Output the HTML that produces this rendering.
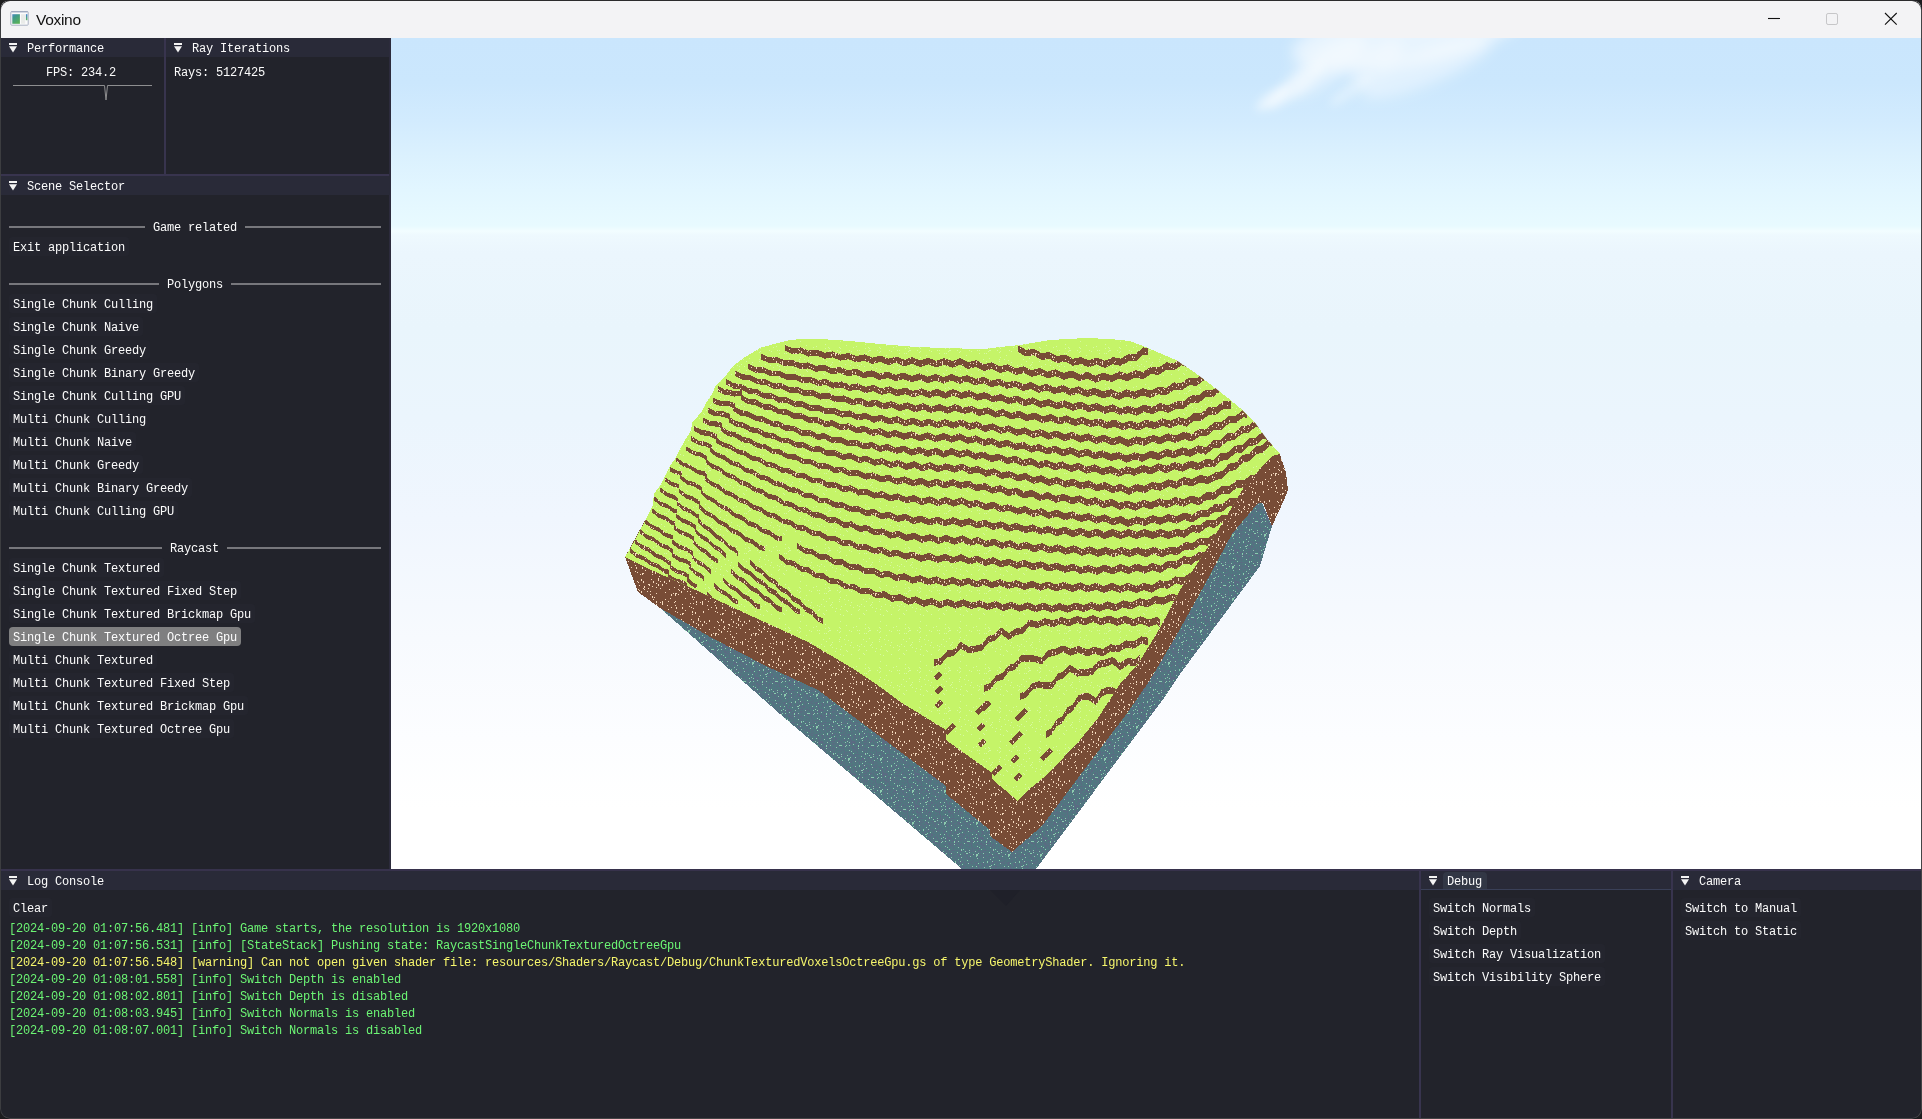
<!DOCTYPE html><html><head><meta charset="utf-8"><title>Voxino</title><style>
html,body{margin:0;padding:0;}
body{width:1922px;height:1119px;overflow:hidden;background:#1c1c1e;position:relative;font-family:"Liberation Mono",monospace;}
#win{will-change:transform;position:absolute;left:0;top:0;width:1922px;height:1119px;border-radius:10px;overflow:hidden;background:#22232b;}
#tb{position:absolute;left:1px;top:1px;width:1920px;height:37px;background:#f3f3f5;}
#ttl{position:absolute;left:36px;top:10px;letter-spacing:-0.3px;font-family:"Liberation Sans",sans-serif;font-size:15.5px;line-height:20px;color:#111;}
.m{position:absolute;white-space:pre;font-family:"Liberation Mono",monospace;font-size:12px;letter-spacing:-0.2px;line-height:14px;color:#fcfcfc;}
.g{color:#6cf574;}
.y{color:#f6f66c;}
.t{position:absolute;background:#292a38;}
.p{position:absolute;background:#22232b;}
.b{position:absolute;background:#24252e;border-radius:3px;height:19px;}
.ln{position:absolute;height:2px;background:#77777c;}
.vb{position:absolute;background:#38344e;}
svg{position:absolute;left:0;top:0;}
</style></head><body><div id="win">
<div id="vp" style="position:absolute;left:391px;top:38px;width:1530px;height:832px;overflow:hidden;background:linear-gradient(#cae6fd 0px,#cbe7fd 45px,#d2ebfe 82px,#dbf1fe 118px,#e2f6ff 152px,#e8faff 188px,#f2fdff 193px,#eef9fe 197px,#ebf6fd 215px,#e9f5fc 290px,#ebf5fd 380px,#f0f6fe 480px,#f7fafe 600px,#fcfdff 700px,#ffffff 770px)">
<svg width="1530" height="832" viewBox="0 0 1530 832" style="position:absolute;left:0;top:0"><defs><filter id="cb" x="-20%" y="-50%" width="140%" height="200%"><feGaussianBlur stdDeviation="7"/></filter><filter id="cb2" x="-20%" y="-50%" width="140%" height="200%"><feGaussianBlur stdDeviation="4"/></filter></defs><g fill="#fff"><g filter="url(#cb)"><ellipse cx="1017" cy="-4" rx="118" ry="32" transform="rotate(-10 1017 -4)" opacity="0.55"/><ellipse cx="1035" cy="30" rx="70" ry="17" transform="rotate(-22 1035 30)" opacity="0.42"/><ellipse cx="935" cy="28" rx="48" ry="17" transform="rotate(-35 935 28)" opacity="0.42"/><ellipse cx="986" cy="25" rx="32" ry="14" transform="rotate(-40 986 25)" opacity="0.35"/></g><g filter="url(#cb2)"><ellipse cx="905" cy="48" rx="36" ry="9" transform="rotate(-38 905 48)" opacity="0.4"/><ellipse cx="882" cy="60" rx="20" ry="7" transform="rotate(-35 882 60)" opacity="0.5"/><ellipse cx="960" cy="52" rx="26" ry="7" transform="rotate(-35 960 52)" opacity="0.3"/></g></g></svg>
<svg width="1530" height="832" viewBox="0 0 1530 832" style="position:absolute;left:0;top:0" shape-rendering="crispEdges">
<defs>
<pattern id="nb" width="40" height="40" patternUnits="userSpaceOnUse"><rect width="40" height="40" fill="#784c36"/><rect x="20" y="9" width="1" height="1" fill="#f6dcc0"/><rect x="3" y="4" width="1" height="1" fill="#f6dcc0"/><rect x="6" y="23" width="1" height="1" fill="#f6dcc0"/><rect x="32" y="13" width="1" height="2" fill="#f6dcc0"/><rect x="27" y="26" width="1" height="2" fill="#f6dcc0"/><rect x="5" y="35" width="1" height="1" fill="#f6dcc0"/><rect x="36" y="7" width="1" height="1" fill="#f6dcc0"/><rect x="37" y="3" width="1" height="1" fill="#f6dcc0"/><rect x="25" y="3" width="1" height="1" fill="#f6dcc0"/><rect x="2" y="35" width="1" height="1" fill="#f6dcc0"/><rect x="18" y="26" width="1" height="2" fill="#f6dcc0"/><rect x="7" y="36" width="1" height="1" fill="#f6dcc0"/><rect x="11" y="6" width="1" height="1" fill="#f6dcc0"/><rect x="12" y="23" width="1" height="2" fill="#f6dcc0"/><rect x="4" y="36" width="1" height="2" fill="#f6dcc0"/><rect x="13" y="31" width="1" height="1" fill="#f6dcc0"/><rect x="27" y="20" width="1" height="1" fill="#f6dcc0"/><rect x="29" y="23" width="1" height="1" fill="#f6dcc0"/><rect x="11" y="15" width="1" height="2" fill="#f6dcc0"/><rect x="19" y="33" width="1" height="1" fill="#f6dcc0"/><rect x="21" y="28" width="1" height="1" fill="#f6dcc0"/><rect x="4" y="7" width="1" height="1" fill="#f6dcc0"/><rect x="10" y="21" width="1" height="2" fill="#f6dcc0"/><rect x="31" y="26" width="1" height="2" fill="#f6dcc0"/><rect x="4" y="35" width="1" height="1" fill="#f6dcc0"/><rect x="20" y="21" width="1" height="1" fill="#f6dcc0"/><rect x="38" y="31" width="1" height="1" fill="#f6dcc0"/><rect x="29" y="4" width="1" height="1" fill="#f6dcc0"/><rect x="17" y="30" width="1" height="1" fill="#f6dcc0"/><rect x="4" y="3" width="1" height="1" fill="#f6dcc0"/><rect x="19" y="36" width="1" height="1" fill="#f6dcc0"/><rect x="28" y="18" width="1" height="1" fill="#f6dcc0"/><rect x="22" y="1" width="1" height="1" fill="#f6dcc0"/><rect x="22" y="10" width="1" height="1" fill="#f6dcc0"/><rect x="31" y="3" width="1" height="2" fill="#f6dcc0"/><rect x="18" y="8" width="1" height="1" fill="#f6dcc0"/><rect x="25" y="25" width="1" height="1" fill="#f6dcc0"/><rect x="31" y="5" width="1" height="2" fill="#f6dcc0"/><rect x="25" y="35" width="1" height="1" fill="#f6dcc0"/><rect x="8" y="27" width="1" height="1" fill="#f6dcc0"/><rect x="17" y="26" width="1" height="1" fill="#f6dcc0"/><rect x="24" y="14" width="1" height="2" fill="#f6dcc0"/><rect x="11" y="9" width="1" height="2" fill="#f6dcc0"/><rect x="14" y="0" width="1" height="1" fill="#f6dcc0"/><rect x="37" y="11" width="1" height="1" fill="#f6dcc0"/><rect x="0" y="9" width="1" height="1" fill="#f6dcc0"/><rect x="23" y="39" width="1" height="1" fill="#f6dcc0"/><rect x="8" y="32" width="1" height="1" fill="#f6dcc0"/><rect x="3" y="29" width="1" height="1" fill="#f6dcc0"/><rect x="35" y="25" width="1" height="1" fill="#f6dcc0"/><rect x="25" y="6" width="1" height="1" fill="#f6dcc0"/><rect x="25" y="3" width="1" height="2" fill="#f6dcc0"/><rect x="13" y="28" width="1" height="2" fill="#f6dcc0"/><rect x="21" y="38" width="1" height="2" fill="#f6dcc0"/><rect x="0" y="36" width="1" height="2" fill="#f6dcc0"/><rect x="6" y="23" width="1" height="1" fill="#f6dcc0"/><rect x="4" y="13" width="1" height="1" fill="#f6dcc0"/><rect x="9" y="16" width="1" height="1" fill="#f6dcc0"/><rect x="38" y="23" width="1" height="1" fill="#f6dcc0"/><rect x="7" y="31" width="1" height="1" fill="#f6dcc0"/><rect x="29" y="30" width="1" height="1" fill="#f6dcc0"/><rect x="5" y="9" width="1" height="2" fill="#f6dcc0"/><rect x="21" y="16" width="1" height="1" fill="#f6dcc0"/><rect x="10" y="33" width="1" height="2" fill="#f6dcc0"/><rect x="33" y="23" width="1" height="2" fill="#f6dcc0"/><rect x="34" y="1" width="1" height="1" fill="#f6dcc0"/><rect x="19" y="5" width="1" height="1" fill="#f6dcc0"/><rect x="16" y="33" width="1" height="1" fill="#f6dcc0"/><rect x="10" y="22" width="1" height="1" fill="#f6dcc0"/><rect x="34" y="34" width="1" height="1" fill="#f6dcc0"/><rect x="21" y="14" width="1" height="1" fill="#f6dcc0"/><rect x="12" y="15" width="1" height="1" fill="#f6dcc0"/><rect x="14" y="12" width="1" height="1" fill="#f6dcc0"/><rect x="22" y="1" width="1" height="1" fill="#f6dcc0"/><rect x="17" y="30" width="1" height="1" fill="#f6dcc0"/><rect x="38" y="22" width="1" height="1" fill="#f6dcc0"/><rect x="22" y="23" width="1" height="2" fill="#f6dcc0"/><rect x="6" y="14" width="1" height="1" fill="#f6dcc0"/><rect x="21" y="13" width="1" height="1" fill="#f6dcc0"/><rect x="39" y="0" width="1" height="1" fill="#f6dcc0"/><rect x="22" y="5" width="1" height="1" fill="#f6dcc0"/><rect x="7" y="24" width="1" height="1" fill="#f6dcc0"/><rect x="12" y="30" width="1" height="1" fill="#f6dcc0"/><rect x="27" y="21" width="1" height="2" fill="#f6dcc0"/><rect x="25" y="29" width="1" height="1" fill="#f6dcc0"/></pattern>
<pattern id="ng" width="40" height="40" patternUnits="userSpaceOnUse"><rect width="40" height="40" fill="#c5f468"/><rect x="5" y="10" width="1" height="1" fill="#d6f9a2"/><rect x="10" y="8" width="1" height="1" fill="#d6f9a2"/><rect x="1" y="9" width="1" height="1" fill="#d6f9a2"/><rect x="37" y="29" width="1" height="1" fill="#d6f9a2"/><rect x="9" y="39" width="1" height="1" fill="#d6f9a2"/><rect x="38" y="30" width="1" height="1" fill="#d6f9a2"/><rect x="22" y="9" width="1" height="1" fill="#d6f9a2"/><rect x="35" y="35" width="1" height="1" fill="#d6f9a2"/><rect x="8" y="1" width="1" height="1" fill="#d6f9a2"/><rect x="0" y="6" width="1" height="1" fill="#d6f9a2"/><rect x="33" y="8" width="1" height="1" fill="#d6f9a2"/><rect x="27" y="12" width="1" height="1" fill="#d6f9a2"/><rect x="13" y="1" width="1" height="1" fill="#d6f9a2"/><rect x="16" y="13" width="1" height="1" fill="#d6f9a2"/><rect x="18" y="32" width="1" height="1" fill="#d6f9a2"/><rect x="15" y="37" width="1" height="1" fill="#d6f9a2"/><rect x="20" y="16" width="1" height="1" fill="#d6f9a2"/><rect x="34" y="26" width="1" height="1" fill="#d6f9a2"/><rect x="8" y="3" width="1" height="1" fill="#d6f9a2"/><rect x="22" y="29" width="1" height="1" fill="#d6f9a2"/><rect x="37" y="33" width="1" height="1" fill="#d6f9a2"/><rect x="26" y="32" width="1" height="1" fill="#d6f9a2"/><rect x="8" y="34" width="1" height="1" fill="#d6f9a2"/><rect x="9" y="33" width="1" height="1" fill="#d6f9a2"/><rect x="32" y="1" width="1" height="1" fill="#d6f9a2"/><rect x="28" y="11" width="1" height="1" fill="#d6f9a2"/><rect x="38" y="0" width="1" height="1" fill="#d6f9a2"/><rect x="9" y="11" width="1" height="1" fill="#d6f9a2"/><rect x="9" y="30" width="1" height="1" fill="#d6f9a2"/><rect x="39" y="7" width="1" height="1" fill="#d6f9a2"/><rect x="35" y="3" width="1" height="1" fill="#d6f9a2"/><rect x="20" y="33" width="1" height="1" fill="#d6f9a2"/><rect x="33" y="35" width="1" height="1" fill="#d6f9a2"/><rect x="30" y="6" width="1" height="1" fill="#d6f9a2"/><rect x="35" y="3" width="1" height="1" fill="#d6f9a2"/><rect x="15" y="12" width="1" height="1" fill="#d6f9a2"/><rect x="17" y="2" width="1" height="1" fill="#d6f9a2"/><rect x="6" y="32" width="1" height="1" fill="#d6f9a2"/><rect x="28" y="35" width="1" height="1" fill="#d6f9a2"/><rect x="1" y="4" width="1" height="1" fill="#d6f9a2"/><rect x="28" y="20" width="1" height="1" fill="#d6f9a2"/><rect x="39" y="32" width="1" height="1" fill="#d6f9a2"/><rect x="38" y="32" width="1" height="1" fill="#d6f9a2"/><rect x="12" y="17" width="1" height="1" fill="#d6f9a2"/><rect x="28" y="32" width="1" height="1" fill="#d6f9a2"/><rect x="34" y="30" width="1" height="1" fill="#d6f9a2"/><rect x="32" y="15" width="1" height="1" fill="#d6f9a2"/><rect x="33" y="16" width="1" height="1" fill="#d6f9a2"/><rect x="35" y="12" width="1" height="1" fill="#d6f9a2"/><rect x="28" y="8" width="1" height="1" fill="#d6f9a2"/><rect x="26" y="7" width="1" height="1" fill="#d6f9a2"/><rect x="25" y="28" width="1" height="1" fill="#d6f9a2"/><rect x="20" y="4" width="1" height="1" fill="#d6f9a2"/><rect x="15" y="27" width="1" height="1" fill="#d6f9a2"/><rect x="4" y="13" width="1" height="1" fill="#d6f9a2"/><rect x="19" y="7" width="1" height="1" fill="#d6f9a2"/><rect x="9" y="23" width="1" height="1" fill="#d6f9a2"/><rect x="9" y="16" width="1" height="1" fill="#d6f9a2"/><rect x="8" y="29" width="1" height="1" fill="#d6f9a2"/><rect x="14" y="6" width="1" height="1" fill="#d6f9a2"/></pattern>
<pattern id="nu" width="32" height="32" patternUnits="userSpaceOnUse"><rect width="32" height="32" fill="#507780"/><rect x="25" y="31" width="1" height="1" fill="#5b6a83"/><rect x="10" y="14" width="1" height="1" fill="#5b6a83"/><rect x="10" y="27" width="1" height="1" fill="#5b6a83"/><rect x="25" y="21" width="1" height="1" fill="#5b6a83"/><rect x="26" y="12" width="1" height="1" fill="#5b6a83"/><rect x="22" y="20" width="1" height="1" fill="#5b6a83"/><rect x="5" y="23" width="1" height="1" fill="#5b6a83"/><rect x="1" y="21" width="1" height="1" fill="#5b6a83"/><rect x="29" y="28" width="1" height="1" fill="#5b6a83"/><rect x="1" y="24" width="1" height="1" fill="#5b6a83"/><rect x="21" y="18" width="1" height="1" fill="#5b6a83"/><rect x="4" y="7" width="1" height="1" fill="#5b6a83"/><rect x="14" y="6" width="1" height="1" fill="#5b6a83"/><rect x="5" y="16" width="1" height="1" fill="#5b6a83"/><rect x="17" y="2" width="1" height="1" fill="#5b6a83"/><rect x="11" y="17" width="1" height="1" fill="#5b6a83"/><rect x="8" y="27" width="1" height="1" fill="#5b6a83"/><rect x="16" y="25" width="1" height="1" fill="#5b6a83"/><rect x="9" y="31" width="1" height="1" fill="#5b6a83"/><rect x="20" y="5" width="1" height="1" fill="#5b6a83"/><rect x="17" y="3" width="1" height="1" fill="#5b6a83"/><rect x="11" y="27" width="1" height="1" fill="#5b6a83"/><rect x="4" y="17" width="1" height="1" fill="#5b6a83"/><rect x="1" y="5" width="1" height="1" fill="#5b6a83"/><rect x="16" y="5" width="1" height="1" fill="#5b6a83"/><rect x="14" y="4" width="1" height="1" fill="#5b6a83"/><rect x="16" y="7" width="1" height="1" fill="#5b6a83"/><rect x="29" y="0" width="1" height="1" fill="#5b6a83"/><rect x="21" y="26" width="1" height="1" fill="#5b6a83"/><rect x="17" y="8" width="1" height="1" fill="#5b6a83"/><rect x="2" y="15" width="1" height="1" fill="#5b6a83"/><rect x="7" y="10" width="1" height="1" fill="#5b6a83"/><rect x="16" y="3" width="1" height="1" fill="#5b6a83"/><rect x="11" y="12" width="1" height="1" fill="#5b6a83"/><rect x="19" y="19" width="1" height="1" fill="#5b6a83"/><rect x="13" y="18" width="1" height="1" fill="#5b6a83"/><rect x="28" y="11" width="1" height="1" fill="#5b6a83"/><rect x="17" y="22" width="1" height="1" fill="#5b6a83"/><rect x="1" y="16" width="1" height="1" fill="#5b6a83"/><rect x="2" y="0" width="1" height="1" fill="#5b6a83"/><rect x="1" y="12" width="1" height="1" fill="#5b6a83"/><rect x="30" y="15" width="1" height="1" fill="#5b6a83"/><rect x="28" y="6" width="1" height="1" fill="#5b6a83"/><rect x="27" y="31" width="1" height="1" fill="#5b6a83"/><rect x="25" y="19" width="1" height="1" fill="#5b6a83"/><rect x="13" y="14" width="1" height="1" fill="#5b6a83"/><rect x="21" y="12" width="1" height="1" fill="#5b6a83"/><rect x="8" y="25" width="1" height="1" fill="#5b6a83"/><rect x="22" y="3" width="1" height="1" fill="#5b6a83"/><rect x="8" y="0" width="1" height="1" fill="#5b6a83"/><rect x="4" y="16" width="1" height="1" fill="#5b6a83"/><rect x="27" y="10" width="1" height="1" fill="#5b6a83"/><rect x="3" y="5" width="1" height="1" fill="#5b6a83"/><rect x="24" y="18" width="1" height="1" fill="#5b6a83"/><rect x="15" y="18" width="1" height="1" fill="#5b6a83"/><rect x="2" y="29" width="1" height="1" fill="#5b6a83"/><rect x="11" y="10" width="1" height="1" fill="#5b6a83"/><rect x="17" y="28" width="1" height="1" fill="#5b6a83"/><rect x="0" y="16" width="1" height="1" fill="#5b6a83"/><rect x="23" y="21" width="1" height="1" fill="#5b6a83"/><rect x="20" y="15" width="1" height="1" fill="#5b6a83"/><rect x="2" y="19" width="1" height="1" fill="#5b6a83"/><rect x="13" y="22" width="1" height="1" fill="#5b6a83"/><rect x="11" y="0" width="1" height="1" fill="#5b6a83"/><rect x="21" y="24" width="1" height="1" fill="#5b6a83"/><rect x="5" y="30" width="1" height="1" fill="#5b6a83"/><rect x="17" y="12" width="1" height="1" fill="#5b6a83"/><rect x="15" y="0" width="1" height="1" fill="#5b6a83"/><rect x="5" y="16" width="1" height="1" fill="#5b6a83"/><rect x="5" y="9" width="1" height="1" fill="#5b6a83"/><rect x="25" y="2" width="1" height="1" fill="#5b6a83"/><rect x="25" y="1" width="1" height="1" fill="#5b6a83"/><rect x="19" y="19" width="1" height="1" fill="#5b6a83"/><rect x="14" y="5" width="1" height="1" fill="#5b6a83"/><rect x="9" y="24" width="1" height="1" fill="#5b6a83"/><rect x="20" y="31" width="1" height="1" fill="#5b6a83"/><rect x="9" y="18" width="1" height="1" fill="#5b6a83"/><rect x="9" y="2" width="1" height="1" fill="#5b6a83"/><rect x="27" y="8" width="1" height="1" fill="#5b6a83"/><rect x="1" y="14" width="1" height="1" fill="#5b6a83"/><rect x="5" y="1" width="1" height="1" fill="#5b6a83"/><rect x="2" y="8" width="1" height="1" fill="#5b6a83"/><rect x="23" y="6" width="1" height="1" fill="#5b6a83"/><rect x="24" y="28" width="1" height="1" fill="#5b6a83"/><rect x="3" y="1" width="1" height="1" fill="#5b6a83"/><rect x="15" y="31" width="1" height="1" fill="#5b6a83"/><rect x="16" y="0" width="1" height="1" fill="#5b6a83"/><rect x="29" y="4" width="1" height="1" fill="#5b6a83"/><rect x="5" y="4" width="1" height="1" fill="#5b6a83"/><rect x="30" y="16" width="1" height="1" fill="#5b6a83"/><rect x="4" y="16" width="1" height="1" fill="#5b6a83"/><rect x="15" y="13" width="1" height="1" fill="#5b6a83"/><rect x="14" y="29" width="1" height="1" fill="#5b6a83"/><rect x="31" y="24" width="1" height="1" fill="#5b6a83"/><rect x="4" y="30" width="1" height="1" fill="#5b6a83"/><rect x="18" y="2" width="1" height="1" fill="#5b6a83"/><rect x="12" y="4" width="1" height="1" fill="#5b6a83"/><rect x="9" y="21" width="1" height="1" fill="#5b6a83"/><rect x="16" y="19" width="1" height="1" fill="#5b6a83"/><rect x="8" y="0" width="1" height="1" fill="#5b6a83"/><rect x="30" y="3" width="1" height="1" fill="#5b6a83"/><rect x="31" y="17" width="1" height="1" fill="#5b6a83"/><rect x="6" y="13" width="1" height="1" fill="#5b6a83"/><rect x="31" y="18" width="1" height="1" fill="#5b6a83"/><rect x="18" y="29" width="1" height="1" fill="#5b6a83"/><rect x="29" y="29" width="1" height="1" fill="#5b6a83"/><rect x="7" y="12" width="1" height="1" fill="#5b6a83"/><rect x="19" y="5" width="1" height="1" fill="#5b6a83"/><rect x="30" y="1" width="1" height="1" fill="#5b6a83"/><rect x="18" y="29" width="1" height="1" fill="#5b6a83"/><rect x="4" y="28" width="1" height="1" fill="#5b6a83"/><rect x="17" y="24" width="1" height="1" fill="#5b6a83"/><rect x="13" y="13" width="1" height="1" fill="#5b6a83"/><rect x="4" y="5" width="1" height="1" fill="#5b6a83"/><rect x="9" y="16" width="1" height="1" fill="#5b6a83"/><rect x="23" y="8" width="1" height="1" fill="#5b6a83"/><rect x="17" y="7" width="1" height="1" fill="#5b6a83"/><rect x="23" y="14" width="1" height="1" fill="#5b6a83"/><rect x="31" y="31" width="1" height="1" fill="#5b6a83"/><rect x="25" y="1" width="1" height="1" fill="#5b6a83"/><rect x="10" y="0" width="1" height="1" fill="#5b6a83"/><rect x="31" y="28" width="1" height="1" fill="#5b6a83"/><rect x="25" y="19" width="1" height="1" fill="#5b6a83"/><rect x="9" y="26" width="1" height="1" fill="#5b6a83"/><rect x="22" y="24" width="1" height="1" fill="#5b6a83"/><rect x="20" y="7" width="1" height="1" fill="#5b6a83"/><rect x="21" y="0" width="1" height="1" fill="#5b6a83"/><rect x="20" y="21" width="1" height="1" fill="#5b6a83"/><rect x="25" y="7" width="1" height="1" fill="#5b6a83"/><rect x="12" y="0" width="1" height="1" fill="#5b6a83"/><rect x="18" y="16" width="1" height="1" fill="#5b6a83"/><rect x="23" y="4" width="1" height="1" fill="#5b6a83"/><rect x="25" y="24" width="1" height="1" fill="#5b6a83"/><rect x="4" y="23" width="1" height="1" fill="#5b6a83"/><rect x="27" y="17" width="1" height="1" fill="#5b6a83"/><rect x="3" y="17" width="1" height="1" fill="#5b6a83"/><rect x="6" y="3" width="1" height="1" fill="#5b6a83"/><rect x="18" y="9" width="1" height="1" fill="#5b6a83"/><rect x="15" y="17" width="1" height="1" fill="#5b6a83"/><rect x="27" y="20" width="1" height="1" fill="#5b6a83"/><rect x="12" y="23" width="1" height="1" fill="#5b6a83"/><rect x="27" y="1" width="1" height="1" fill="#5b6a83"/><rect x="25" y="13" width="1" height="1" fill="#5b6a83"/><rect x="5" y="3" width="1" height="1" fill="#5b6a83"/><rect x="26" y="28" width="1" height="1" fill="#5b6a83"/><rect x="8" y="18" width="1" height="1" fill="#5b6a83"/><rect x="31" y="3" width="1" height="1" fill="#5b6a83"/><rect x="8" y="10" width="1" height="1" fill="#5b6a83"/><rect x="30" y="26" width="1" height="1" fill="#5b6a83"/><rect x="21" y="18" width="1" height="1" fill="#5b6a83"/><rect x="19" y="16" width="1" height="1" fill="#5b6a83"/><rect x="16" y="25" width="1" height="1" fill="#5b6a83"/><rect x="15" y="19" width="1" height="1" fill="#5b6a83"/><rect x="30" y="25" width="1" height="1" fill="#5b6a83"/><rect x="7" y="10" width="1" height="1" fill="#5b6a83"/><rect x="10" y="4" width="1" height="1" fill="#5b6a83"/><rect x="13" y="31" width="1" height="1" fill="#5b6a83"/><rect x="14" y="28" width="1" height="1" fill="#5b6a83"/><rect x="21" y="28" width="1" height="1" fill="#5b6a83"/><rect x="27" y="8" width="1" height="1" fill="#5b6a83"/><rect x="12" y="15" width="1" height="1" fill="#5b6a83"/><rect x="5" y="11" width="1" height="1" fill="#5b6a83"/><rect x="21" y="5" width="1" height="1" fill="#5b6a83"/><rect x="20" y="15" width="1" height="1" fill="#5b6a83"/><rect x="23" y="16" width="1" height="1" fill="#5b6a83"/><rect x="12" y="1" width="1" height="1" fill="#5b6a83"/><rect x="26" y="24" width="1" height="1" fill="#5b6a83"/><rect x="26" y="13" width="1" height="1" fill="#5b6a83"/><rect x="24" y="17" width="1" height="1" fill="#5b6a83"/><rect x="21" y="3" width="1" height="1" fill="#5b6a83"/><rect x="31" y="17" width="1" height="1" fill="#5b6a83"/><rect x="23" y="8" width="1" height="1" fill="#5b6a83"/><rect x="13" y="5" width="1" height="1" fill="#5b6a83"/><rect x="17" y="15" width="1" height="1" fill="#5b6a83"/><rect x="24" y="25" width="1" height="1" fill="#5b6a83"/><rect x="28" y="27" width="1" height="1" fill="#5b6a83"/><rect x="19" y="1" width="1" height="1" fill="#5b6a83"/><rect x="8" y="2" width="1" height="1" fill="#5b6a83"/><rect x="27" y="30" width="1" height="1" fill="#5b6a83"/><rect x="31" y="0" width="1" height="1" fill="#5b6a83"/><rect x="4" y="25" width="1" height="1" fill="#5b6a83"/><rect x="29" y="28" width="1" height="1" fill="#5b6a83"/><rect x="15" y="6" width="1" height="1" fill="#5b6a83"/><rect x="14" y="9" width="1" height="1" fill="#5b6a83"/><rect x="9" y="6" width="1" height="1" fill="#5b6a83"/><rect x="29" y="5" width="1" height="1" fill="#5b6a83"/><rect x="2" y="0" width="1" height="1" fill="#5b6a83"/><rect x="8" y="14" width="1" height="1" fill="#5b6a83"/><rect x="2" y="19" width="1" height="1" fill="#5b6a83"/><rect x="8" y="16" width="1" height="1" fill="#5b6a83"/><rect x="27" y="7" width="1" height="1" fill="#5b6a83"/><rect x="6" y="4" width="1" height="1" fill="#5b6a83"/><rect x="19" y="12" width="1" height="1" fill="#5b6a83"/><rect x="24" y="16" width="1" height="1" fill="#5b6a83"/><rect x="14" y="0" width="1" height="1" fill="#5b6a83"/><rect x="0" y="19" width="1" height="1" fill="#5b6a83"/><rect x="29" y="17" width="1" height="1" fill="#5b6a83"/><rect x="20" y="15" width="1" height="1" fill="#5b6a83"/><rect x="30" y="15" width="1" height="1" fill="#5b6a83"/><rect x="15" y="1" width="1" height="1" fill="#5b6a83"/><rect x="26" y="19" width="1" height="1" fill="#5b6a83"/><rect x="3" y="1" width="1" height="1" fill="#5b6a83"/><rect x="12" y="31" width="1" height="1" fill="#5b6a83"/><rect x="26" y="5" width="1" height="1" fill="#5b6a83"/><rect x="16" y="14" width="1" height="1" fill="#5b6a83"/><rect x="27" y="23" width="1" height="1" fill="#5b6a83"/><rect x="14" y="31" width="1" height="1" fill="#5b6a83"/><rect x="2" y="21" width="1" height="1" fill="#5b6a83"/><rect x="26" y="23" width="1" height="1" fill="#5b6a83"/><rect x="25" y="12" width="1" height="1" fill="#5b6a83"/><rect x="0" y="18" width="1" height="1" fill="#5b6a83"/><rect x="4" y="13" width="1" height="1" fill="#5b6a83"/><rect x="31" y="12" width="1" height="1" fill="#5b6a83"/><rect x="19" y="12" width="1" height="1" fill="#5b6a83"/><rect x="14" y="29" width="1" height="1" fill="#5b6a83"/><rect x="14" y="16" width="1" height="1" fill="#5b6a83"/><rect x="18" y="6" width="1" height="1" fill="#5b6a83"/><rect x="31" y="11" width="1" height="1" fill="#5b6a83"/><rect x="14" y="31" width="1" height="1" fill="#5b6a83"/><rect x="26" y="3" width="1" height="1" fill="#5b6a83"/><rect x="9" y="25" width="1" height="1" fill="#5b6a83"/><rect x="3" y="13" width="1" height="1" fill="#5b6a83"/><rect x="1" y="9" width="1" height="1" fill="#5b6a83"/><rect x="26" y="3" width="1" height="1" fill="#5b6a83"/><rect x="3" y="11" width="1" height="1" fill="#5b6a83"/><rect x="25" y="28" width="1" height="1" fill="#5b6a83"/><rect x="20" y="7" width="1" height="1" fill="#5b6a83"/><rect x="5" y="10" width="1" height="1" fill="#5b6a83"/><rect x="21" y="12" width="1" height="1" fill="#5b6a83"/><rect x="11" y="29" width="1" height="1" fill="#5b6a83"/><rect x="2" y="19" width="1" height="1" fill="#5b6a83"/><rect x="24" y="23" width="1" height="1" fill="#5b6a83"/><rect x="21" y="28" width="1" height="1" fill="#5b6a83"/><rect x="10" y="6" width="1" height="1" fill="#5b6a83"/><rect x="0" y="5" width="1" height="1" fill="#5b6a83"/><rect x="17" y="5" width="1" height="1" fill="#5b6a83"/><rect x="22" y="26" width="1" height="1" fill="#5b6a83"/><rect x="7" y="13" width="1" height="1" fill="#5b6a83"/><rect x="24" y="22" width="1" height="1" fill="#5b6a83"/><rect x="19" y="27" width="1" height="1" fill="#5b6a83"/><rect x="5" y="3" width="1" height="1" fill="#5b6a83"/><rect x="30" y="12" width="1" height="1" fill="#5b6a83"/><rect x="23" y="28" width="1" height="1" fill="#5b6a83"/><rect x="12" y="20" width="1" height="1" fill="#5b6a83"/><rect x="23" y="30" width="1" height="1" fill="#5b6a83"/><rect x="1" y="26" width="1" height="1" fill="#5b6a83"/><rect x="15" y="25" width="1" height="1" fill="#5b6a83"/><rect x="2" y="24" width="1" height="1" fill="#5b6a83"/><rect x="2" y="29" width="1" height="1" fill="#5b6a83"/><rect x="4" y="3" width="1" height="1" fill="#5b6a83"/><rect x="16" y="12" width="1" height="1" fill="#5b6a83"/><rect x="4" y="21" width="1" height="1" fill="#5b6a83"/><rect x="23" y="17" width="1" height="1" fill="#5b6a83"/><rect x="21" y="2" width="1" height="1" fill="#5b6a83"/><rect x="16" y="20" width="1" height="1" fill="#5b6a83"/><rect x="17" y="19" width="1" height="1" fill="#5b6a83"/><rect x="0" y="4" width="1" height="1" fill="#5b6a83"/><rect x="1" y="14" width="1" height="1" fill="#5b6a83"/><rect x="6" y="30" width="1" height="1" fill="#5b6a83"/><rect x="29" y="24" width="1" height="1" fill="#5b6a83"/><rect x="16" y="27" width="1" height="1" fill="#5b6a83"/><rect x="31" y="8" width="1" height="1" fill="#5b6a83"/><rect x="31" y="11" width="1" height="1" fill="#5b6a83"/><rect x="0" y="19" width="1" height="1" fill="#5b6a83"/><rect x="9" y="15" width="1" height="1" fill="#5b6a83"/><rect x="20" y="20" width="1" height="1" fill="#5b6a83"/><rect x="29" y="23" width="1" height="1" fill="#5b6a83"/><rect x="5" y="12" width="1" height="1" fill="#5b6a83"/><rect x="25" y="10" width="1" height="1" fill="#5b6a83"/><rect x="15" y="26" width="1" height="1" fill="#5b6a83"/><rect x="4" y="2" width="1" height="1" fill="#5b6a83"/><rect x="30" y="20" width="1" height="1" fill="#5b6a83"/><rect x="10" y="27" width="1" height="1" fill="#5b6a83"/><rect x="6" y="4" width="1" height="1" fill="#5b6a83"/><rect x="16" y="5" width="1" height="1" fill="#5b6a83"/><rect x="13" y="6" width="1" height="1" fill="#5b6a83"/><rect x="26" y="31" width="1" height="1" fill="#5b6a83"/><rect x="28" y="11" width="1" height="1" fill="#5b6a83"/><rect x="14" y="8" width="1" height="1" fill="#5b6a83"/><rect x="26" y="29" width="1" height="1" fill="#5b6a83"/><rect x="15" y="7" width="1" height="1" fill="#5b6a83"/><rect x="18" y="18" width="1" height="1" fill="#5b6a83"/><rect x="17" y="17" width="1" height="1" fill="#5b6a83"/><rect x="23" y="16" width="1" height="1" fill="#5b6a83"/><rect x="16" y="12" width="1" height="1" fill="#5b6a83"/><rect x="28" y="15" width="1" height="1" fill="#5b6a83"/><rect x="11" y="15" width="1" height="1" fill="#5b6a83"/><rect x="15" y="9" width="1" height="1" fill="#5b6a83"/><rect x="18" y="12" width="1" height="1" fill="#5b6a83"/><rect x="20" y="4" width="1" height="1" fill="#5b6a83"/><rect x="25" y="16" width="1" height="1" fill="#5b6a83"/><rect x="15" y="14" width="1" height="1" fill="#5b6a83"/><rect x="6" y="29" width="1" height="1" fill="#5b6a83"/><rect x="2" y="6" width="1" height="1" fill="#5b6a83"/><rect x="0" y="30" width="1" height="1" fill="#5b6a83"/><rect x="14" y="28" width="1" height="1" fill="#5b6a83"/><rect x="23" y="2" width="1" height="1" fill="#5b6a83"/><rect x="18" y="14" width="1" height="1" fill="#5b6a83"/><rect x="7" y="3" width="1" height="1" fill="#5b6a83"/><rect x="12" y="12" width="1" height="1" fill="#5b6a83"/><rect x="4" y="23" width="1" height="1" fill="#5b6a83"/><rect x="11" y="28" width="1" height="1" fill="#5b6a83"/><rect x="16" y="0" width="1" height="1" fill="#5b6a83"/><rect x="6" y="22" width="1" height="1" fill="#5b6a83"/><rect x="13" y="2" width="1" height="1" fill="#5b6a83"/><rect x="23" y="21" width="1" height="1" fill="#5b6a83"/><rect x="9" y="2" width="1" height="1" fill="#5b6a83"/><rect x="13" y="16" width="1" height="1" fill="#5b6a83"/><rect x="2" y="13" width="1" height="1" fill="#5b6a83"/><rect x="0" y="20" width="1" height="1" fill="#5b6a83"/><rect x="26" y="23" width="1" height="1" fill="#5b6a83"/><rect x="11" y="19" width="1" height="1" fill="#5b6a83"/><rect x="4" y="13" width="1" height="1" fill="#5b6a83"/><rect x="2" y="31" width="1" height="1" fill="#5b6a83"/><rect x="30" y="4" width="1" height="1" fill="#5b6a83"/><rect x="26" y="6" width="1" height="1" fill="#5b6a83"/><rect x="25" y="9" width="1" height="1" fill="#5b6a83"/><rect x="5" y="10" width="1" height="1" fill="#5b6a83"/><rect x="25" y="17" width="1" height="1" fill="#5b6a83"/><rect x="26" y="18" width="1" height="1" fill="#5b6a83"/><rect x="19" y="26" width="1" height="1" fill="#5b6a83"/><rect x="3" y="19" width="1" height="1" fill="#5b6a83"/><rect x="22" y="26" width="1" height="1" fill="#5b6a83"/><rect x="26" y="1" width="1" height="1" fill="#5b6a83"/><rect x="23" y="12" width="1" height="1" fill="#5b6a83"/><rect x="25" y="25" width="1" height="1" fill="#5b6a83"/><rect x="13" y="0" width="1" height="1" fill="#5b6a83"/><rect x="27" y="10" width="1" height="1" fill="#5b6a83"/><rect x="27" y="7" width="1" height="1" fill="#5b6a83"/><rect x="5" y="25" width="1" height="1" fill="#5b6a83"/><rect x="23" y="29" width="1" height="1" fill="#5b6a83"/><rect x="10" y="8" width="1" height="1" fill="#5b6a83"/><rect x="0" y="3" width="1" height="1" fill="#5b6a83"/><rect x="9" y="25" width="1" height="1" fill="#5b6a83"/><rect x="5" y="23" width="1" height="1" fill="#5b6a83"/><rect x="10" y="9" width="1" height="1" fill="#5b6a83"/><rect x="22" y="18" width="1" height="1" fill="#5b6a83"/><rect x="10" y="10" width="1" height="1" fill="#5b6a83"/><rect x="4" y="6" width="1" height="1" fill="#5b6a83"/><rect x="24" y="31" width="1" height="1" fill="#5b6a83"/><rect x="12" y="19" width="1" height="1" fill="#5b6a83"/><rect x="8" y="2" width="1" height="1" fill="#5b6a83"/><rect x="30" y="20" width="1" height="1" fill="#5b6a83"/><rect x="3" y="24" width="1" height="1" fill="#5b6a83"/><rect x="5" y="10" width="1" height="1" fill="#5b6a83"/><rect x="14" y="25" width="1" height="1" fill="#5b6a83"/><rect x="12" y="30" width="1" height="1" fill="#5b6a83"/><rect x="11" y="13" width="1" height="1" fill="#5b6a83"/><rect x="2" y="25" width="1" height="1" fill="#5b6a83"/><rect x="10" y="24" width="1" height="1" fill="#5b6a83"/><rect x="22" y="7" width="1" height="1" fill="#5b6a83"/><rect x="9" y="15" width="1" height="1" fill="#5b6a83"/><rect x="12" y="2" width="1" height="1" fill="#5b6a83"/><rect x="2" y="20" width="1" height="1" fill="#5b6a83"/><rect x="7" y="24" width="1" height="1" fill="#5b6a83"/><rect x="29" y="19" width="1" height="1" fill="#5b6a83"/><rect x="26" y="19" width="1" height="1" fill="#5b6a83"/><rect x="15" y="27" width="1" height="1" fill="#5b6a83"/><rect x="24" y="23" width="1" height="1" fill="#5b6a83"/><rect x="28" y="28" width="1" height="1" fill="#5b6a83"/><rect x="11" y="1" width="1" height="1" fill="#5b6a83"/><rect x="0" y="31" width="1" height="1" fill="#5b6a83"/><rect x="29" y="15" width="1" height="1" fill="#5b6a83"/><rect x="28" y="29" width="1" height="1" fill="#5b6a83"/><rect x="11" y="30" width="1" height="1" fill="#5b6a83"/><rect x="25" y="6" width="1" height="1" fill="#5b6a83"/><rect x="4" y="8" width="1" height="1" fill="#5b6a83"/><rect x="22" y="27" width="1" height="1" fill="#5b6a83"/><rect x="23" y="5" width="1" height="1" fill="#5b6a83"/><rect x="28" y="2" width="1" height="1" fill="#5b6a83"/><rect x="2" y="8" width="1" height="1" fill="#5b6a83"/><rect x="5" y="20" width="1" height="1" fill="#5b6a83"/><rect x="5" y="3" width="1" height="1" fill="#5b6a83"/><rect x="24" y="8" width="1" height="1" fill="#5b6a83"/><rect x="1" y="4" width="1" height="1" fill="#5b6a83"/><rect x="7" y="12" width="1" height="1" fill="#5b6a83"/><rect x="8" y="31" width="1" height="1" fill="#5b6a83"/><rect x="18" y="10" width="1" height="1" fill="#5b6a83"/><rect x="14" y="4" width="1" height="1" fill="#5b6a83"/><rect x="22" y="16" width="1" height="1" fill="#5b6a83"/><rect x="10" y="20" width="1" height="1" fill="#8ccbae"/><rect x="17" y="29" width="1" height="1" fill="#8ccbae"/><rect x="9" y="16" width="1" height="1" fill="#8ccbae"/><rect x="30" y="13" width="1" height="1" fill="#8ccbae"/><rect x="16" y="15" width="1" height="1" fill="#8ccbae"/><rect x="20" y="23" width="1" height="1" fill="#8ccbae"/><rect x="2" y="12" width="1" height="1" fill="#8ccbae"/><rect x="11" y="25" width="1" height="1" fill="#8ccbae"/><rect x="10" y="17" width="1" height="1" fill="#8ccbae"/><rect x="20" y="24" width="1" height="1" fill="#8ccbae"/><rect x="10" y="16" width="1" height="1" fill="#8ccbae"/><rect x="7" y="3" width="1" height="1" fill="#8ccbae"/><rect x="23" y="28" width="1" height="1" fill="#8ccbae"/><rect x="6" y="16" width="1" height="1" fill="#8ccbae"/><rect x="25" y="23" width="1" height="1" fill="#8ccbae"/><rect x="16" y="24" width="1" height="1" fill="#8ccbae"/><rect x="23" y="9" width="1" height="1" fill="#8ccbae"/><rect x="23" y="21" width="1" height="1" fill="#8ccbae"/><rect x="5" y="28" width="1" height="1" fill="#8ccbae"/><rect x="14" y="11" width="1" height="1" fill="#8ccbae"/><rect x="3" y="18" width="1" height="1" fill="#8ccbae"/><rect x="16" y="19" width="1" height="1" fill="#8ccbae"/><rect x="20" y="0" width="1" height="1" fill="#8ccbae"/><rect x="2" y="14" width="1" height="1" fill="#8ccbae"/><rect x="9" y="18" width="1" height="1" fill="#8ccbae"/><rect x="27" y="26" width="1" height="1" fill="#8ccbae"/><rect x="23" y="3" width="1" height="1" fill="#8ccbae"/><rect x="8" y="31" width="1" height="1" fill="#8ccbae"/><rect x="14" y="2" width="1" height="1" fill="#8ccbae"/><rect x="1" y="3" width="1" height="1" fill="#8ccbae"/><rect x="0" y="22" width="1" height="1" fill="#8ccbae"/><rect x="19" y="6" width="1" height="1" fill="#8ccbae"/><rect x="22" y="14" width="1" height="1" fill="#8ccbae"/><rect x="26" y="19" width="1" height="1" fill="#8ccbae"/><rect x="8" y="13" width="1" height="1" fill="#8ccbae"/><rect x="23" y="30" width="1" height="1" fill="#8ccbae"/><rect x="10" y="8" width="1" height="1" fill="#8ccbae"/><rect x="0" y="15" width="1" height="1" fill="#8ccbae"/><rect x="9" y="28" width="1" height="1" fill="#8ccbae"/><rect x="6" y="4" width="1" height="1" fill="#8ccbae"/><rect x="9" y="17" width="1" height="1" fill="#8ccbae"/><rect x="25" y="16" width="1" height="1" fill="#8ccbae"/><rect x="0" y="3" width="1" height="1" fill="#8ccbae"/><rect x="22" y="28" width="1" height="1" fill="#8ccbae"/><rect x="31" y="15" width="1" height="1" fill="#8ccbae"/><rect x="10" y="0" width="1" height="1" fill="#8ccbae"/><rect x="2" y="3" width="1" height="1" fill="#8ccbae"/><rect x="1" y="25" width="1" height="1" fill="#8ccbae"/><rect x="11" y="15" width="1" height="1" fill="#8ccbae"/><rect x="10" y="3" width="1" height="1" fill="#8ccbae"/><rect x="6" y="0" width="1" height="1" fill="#8ccbae"/><rect x="12" y="9" width="1" height="1" fill="#8ccbae"/><rect x="26" y="12" width="1" height="1" fill="#8ccbae"/><rect x="26" y="11" width="1" height="1" fill="#8ccbae"/><rect x="19" y="4" width="1" height="1" fill="#8ccbae"/><rect x="19" y="3" width="1" height="1" fill="#8ccbae"/><rect x="30" y="0" width="1" height="1" fill="#8ccbae"/><rect x="24" y="27" width="1" height="1" fill="#8ccbae"/><rect x="29" y="5" width="1" height="1" fill="#8ccbae"/><rect x="28" y="11" width="1" height="1" fill="#8ccbae"/></pattern>
<clipPath id="cg"><polygon points="234.0,519.0 239.6,509.5 244.6,501.0 249.6,491.0 254.6,482.0 261.5,468.0 263.0,456.0 269.0,447.6 274.0,438.0 279.0,428.0 284.6,420.0 289.0,411.0 294.6,401.0 299.0,394.5 301.5,384.5 310.0,374.5 315.0,365.0 321.0,356.0 325.0,347.0 334.6,338.0 342.0,328.0 354.0,319.0 370.0,309.5 396.5,302.6 409.0,301.0 429.0,301.0 459.0,303.0 489.0,306.0 519.0,308.5 549.0,310.0 593.0,311.0 609.0,309.0 629.0,307.0 659.0,302.0 695.0,300.0 719.0,301.0 739.0,303.0 757.0,310.0 771.0,316.0 785.0,322.0 803.0,334.0 819.0,346.0 837.0,360.0 849.0,370.0 865.0,386.0 875.0,400.0 889.0,416.0 889.0,416.0 881.0,418.0 855.0,446.0 843.0,466.0 819.0,506.0 789.0,552.0 769.0,590.0 747.0,626.0 729.0,646.0 707.0,680.0 689.0,702.0 657.0,736.0 635.0,754.0 627.0,763.0 601.0,741.0 601.0,735.0 555.0,702.0 555.0,692.0 529.0,676.0 511.0,665.0 485.0,646.0 461.0,630.0 439.0,617.0 419.0,605.0 389.0,591.0 369.0,582.0 339.0,568.0 309.0,554.0 289.0,545.0 269.0,536.0 254.0,529.0"/></clipPath>
</defs>
<polygon points="247.0,554.0 269.0,570.0 389.0,676.0 571.0,831.0 645.0,831.0 773.0,660.0 789.0,636.0 829.0,582.0 869.0,528.0 881.0,488.0 871.0,465.0 859.0,460.0 799.0,522.0 621.0,762.0 309.0,552.0" fill="url(#nu)"/>
<polygon points="234.0,519.0 247.0,554.0 269.0,570.0 321.0,600.0 375.0,628.0 427.0,652.0 555.0,748.0 555.0,756.0 599.0,792.0 599.0,798.0 621.0,814.0 651.0,788.0 693.0,732.0 737.0,674.0 759.0,642.0 785.0,598.0 813.0,548.0 841.0,496.0 867.0,465.0 872.0,465.0 881.0,488.0 893.0,462.0 897.0,452.0 895.0,434.0 889.0,416.0 709.0,362.0 409.0,301.0 396.5,302.6 309.0,382.0" fill="url(#nb)"/>
<polygon points="234.0,519.0 239.6,509.5 244.6,501.0 249.6,491.0 254.6,482.0 261.5,468.0 263.0,456.0 269.0,447.6 274.0,438.0 279.0,428.0 284.6,420.0 289.0,411.0 294.6,401.0 299.0,394.5 301.5,384.5 310.0,374.5 315.0,365.0 321.0,356.0 325.0,347.0 334.6,338.0 342.0,328.0 354.0,319.0 370.0,309.5 396.5,302.6 409.0,301.0 429.0,301.0 459.0,303.0 489.0,306.0 519.0,308.5 549.0,310.0 593.0,311.0 609.0,309.0 629.0,307.0 659.0,302.0 695.0,300.0 719.0,301.0 739.0,303.0 757.0,310.0 771.0,316.0 785.0,322.0 803.0,334.0 819.0,346.0 837.0,360.0 849.0,370.0 865.0,386.0 875.0,400.0 889.0,416.0 889.0,416.0 881.0,418.0 855.0,446.0 843.0,466.0 819.0,506.0 789.0,552.0 769.0,590.0 747.0,626.0 729.0,646.0 707.0,680.0 689.0,702.0 657.0,736.0 635.0,754.0 627.0,763.0 601.0,741.0 601.0,735.0 555.0,702.0 555.0,692.0 529.0,676.0 511.0,665.0 485.0,646.0 461.0,630.0 439.0,617.0 419.0,605.0 389.0,591.0 369.0,582.0 339.0,568.0 309.0,554.0 289.0,545.0 269.0,536.0 254.0,529.0" fill="url(#ng)"/>
<g clip-path="url(#cg)" fill="url(#nb)" stroke="none">
<polygon points="394.0,307.2 401.9,310.3 409.8,309.4 417.7,312.6 425.7,311.5 433.6,314.7 441.5,313.4 449.5,316.6 457.5,315.0 465.4,318.2 473.4,316.4 481.4,319.6 489.3,317.6 497.3,320.8 505.3,318.5 513.3,321.7 521.3,319.2 529.3,322.5 537.3,319.7 545.3,322.9 553.3,320.1 561.3,323.2 569.3,320.2 577.2,324.3 585.1,322.3 593.1,326.3 601.0,324.3 608.9,328.3 616.9,326.3 624.8,330.3 632.7,328.3 640.7,332.3 648.6,329.9 656.6,333.6 664.6,331.3 672.6,334.9 680.5,332.6 688.5,336.2 696.5,333.9 704.4,337.6 712.4,334.7 720.4,337.1 728.4,333.4 736.3,335.8 744.3,332.2 752.2,333.9 759.9,328.7 767.6,329.5 775.3,324.3 783.0,325.1 790.6,319.8 795.5,321.4 795.5,329.0 790.6,327.4 783.0,332.5 775.3,331.7 767.6,336.9 759.9,336.1 752.2,341.2 744.3,339.5 736.3,343.1 728.4,340.6 720.4,344.2 712.4,341.8 704.4,344.6 696.5,340.9 688.5,343.2 680.5,339.5 672.6,341.8 664.6,338.1 656.6,340.4 648.6,336.7 640.7,339.0 632.7,335.1 624.8,337.0 616.9,333.0 608.9,334.9 601.0,330.9 593.1,332.9 585.1,328.9 577.2,330.9 569.3,326.8 561.3,329.8 553.3,326.7 545.3,329.5 537.3,326.3 529.3,329.1 521.3,325.8 513.3,328.3 505.3,325.0 497.3,327.2 489.3,323.9 481.4,326.0 473.4,322.7 465.4,324.4 457.5,321.2 449.5,322.7 441.5,319.4 433.6,320.7 425.7,317.5 417.7,318.6 409.8,315.3 401.9,316.1 394.0,312.9"/>
<polygon points="370.0,315.8 377.8,319.2 385.7,319.0 393.5,322.3 401.4,321.8 409.3,325.2 417.2,324.4 425.0,327.8 433.0,326.8 440.9,330.2 448.8,328.9 456.7,332.3 464.7,330.7 472.6,334.1 480.6,332.3 488.6,335.6 496.5,333.6 504.5,336.9 512.5,334.6 520.5,337.9 528.5,335.3 536.5,338.6 544.5,335.9 552.5,339.0 560.5,336.1 568.5,339.2 576.4,337.0 584.4,340.9 592.3,338.8 600.3,342.7 608.2,340.6 616.2,344.5 624.1,342.4 632.1,346.2 640.0,344.1 648.0,348.0 655.9,345.7 663.9,349.4 671.9,347.0 679.8,350.7 687.8,348.4 695.8,352.1 703.8,349.8 711.7,353.4 719.7,351.1 727.7,354.8 735.6,351.4 743.6,353.8 751.6,350.1 759.6,352.5 767.5,348.9 775.2,349.8 782.9,344.4 790.5,345.0 798.2,339.6 805.8,340.2 812.5,335.1 812.5,342.7 805.8,347.8 798.2,347.2 790.5,352.5 782.9,351.9 775.2,357.3 767.5,356.3 759.6,359.9 751.6,357.5 743.6,361.0 735.6,358.6 727.7,362.0 719.7,358.3 711.7,360.5 703.8,356.8 695.8,359.1 687.8,355.4 679.8,357.7 671.9,354.0 663.9,356.2 655.9,352.5 648.0,354.8 640.0,350.9 632.1,353.0 624.1,349.0 616.2,351.1 608.2,347.2 600.3,349.3 592.3,345.4 584.4,347.5 576.4,343.6 568.5,345.8 560.5,342.7 552.5,345.6 544.5,342.5 536.5,345.2 528.5,341.9 520.5,344.4 512.5,341.1 504.5,343.3 496.5,340.0 488.6,342.0 480.6,338.6 472.6,340.3 464.7,336.9 456.7,338.4 448.8,335.0 440.9,336.3 433.0,332.8 425.0,333.8 417.2,330.4 409.3,331.1 401.4,327.7 393.5,328.1 385.7,324.7 377.8,324.9 370.0,321.5"/>
<polygon points="356.5,325.4 364.3,328.9 372.0,329.1 379.8,332.6 387.6,332.5 395.5,336.0 403.3,335.7 411.2,339.2 419.0,338.5 426.9,342.0 434.8,341.1 442.7,344.6 450.6,343.4 458.6,346.8 466.5,345.3 474.4,348.8 482.4,347.0 490.4,350.4 498.3,348.4 506.3,351.8 514.3,349.5 522.3,352.9 530.3,350.3 538.2,353.6 546.2,350.9 554.2,354.1 562.2,351.1 570.2,354.3 578.2,352.2 586.1,356.1 594.1,354.0 602.0,357.9 610.0,355.8 617.9,359.7 625.9,357.6 633.8,361.4 641.8,359.3 649.7,363.2 657.7,360.9 665.7,364.5 673.6,362.2 681.6,365.9 689.6,363.6 697.5,367.3 705.5,365.0 713.5,368.7 721.4,366.4 729.4,370.0 737.4,367.7 745.4,370.3 753.3,366.6 761.3,368.8 769.3,365.1 777.2,367.4 785.1,363.3 792.6,363.4 800.0,357.4 807.4,357.5 814.9,351.5 822.3,351.6 828.2,346.3 828.2,353.9 822.3,359.2 814.9,359.1 807.4,365.1 800.0,365.0 792.6,370.9 785.1,370.8 777.2,374.8 769.3,372.5 761.3,376.2 753.3,373.9 745.4,377.6 737.4,375.0 729.4,377.2 721.4,373.5 713.5,375.8 705.5,372.1 697.5,374.3 689.6,370.6 681.6,372.9 673.6,369.2 665.7,371.4 657.7,367.7 649.7,370.0 641.8,366.1 633.8,368.2 625.9,364.2 617.9,366.3 610.0,362.4 602.0,364.5 594.1,360.6 586.1,362.7 578.2,358.8 570.2,360.9 562.2,357.7 554.2,360.7 546.2,357.5 538.2,360.2 530.3,356.9 522.3,359.4 514.3,356.0 506.3,358.3 498.3,354.8 490.4,356.8 482.4,353.3 474.4,355.0 466.5,351.6 458.6,353.0 450.6,349.5 442.7,350.6 434.8,347.1 426.9,348.0 419.0,344.4 411.2,345.0 403.3,341.5 395.5,341.8 387.6,338.3 379.8,338.3 372.0,334.8 364.3,334.5 356.5,331.0"/>
<polygon points="344.0,332.5 351.7,336.3 359.3,337.0 367.0,340.8 374.7,341.2 382.5,345.0 390.2,345.1 398.0,348.8 405.8,348.6 413.6,352.4 421.4,351.9 429.3,355.6 437.2,354.8 445.0,358.5 452.9,357.4 460.8,361.0 468.7,359.6 476.7,363.2 484.6,361.6 492.6,365.1 500.5,363.1 508.5,366.6 516.5,364.3 524.5,367.8 532.4,365.2 540.4,368.6 548.4,365.9 556.4,369.1 564.4,366.1 572.4,369.6 580.4,367.5 588.3,371.4 596.3,369.3 604.2,373.2 612.2,371.0 620.1,374.9 628.1,372.8 636.0,376.7 644.0,374.5 651.9,378.4 659.9,376.0 667.8,379.7 675.8,377.4 683.8,381.1 691.8,378.8 699.7,382.5 707.7,380.2 715.7,383.9 723.6,381.5 731.6,385.2 739.6,382.8 747.5,385.2 755.5,381.6 763.5,384.0 771.5,380.4 779.5,382.8 787.4,379.2 795.3,381.2 802.7,375.2 810.2,375.2 817.6,369.3 825.0,369.3 832.5,363.3 839.9,363.3 839.9,370.9 832.5,370.9 825.0,376.9 817.6,376.9 810.2,382.8 802.7,382.8 795.3,388.7 787.4,386.7 779.5,390.3 771.5,387.8 763.5,391.4 755.5,389.0 747.5,392.5 739.6,390.1 731.6,392.4 723.6,388.7 715.7,391.0 707.7,387.3 699.7,389.5 691.8,385.8 683.8,388.1 675.8,384.4 667.8,386.6 659.9,382.9 651.9,385.2 644.0,381.3 636.0,383.4 628.1,379.5 620.1,381.6 612.2,377.7 604.2,379.8 596.3,375.9 588.3,378.0 580.4,374.1 572.4,376.2 564.4,372.7 556.4,375.7 548.4,372.5 540.4,375.2 532.4,371.8 524.5,374.4 516.5,370.9 508.5,373.1 500.5,369.6 492.6,371.5 484.6,367.9 476.7,369.5 468.7,365.9 460.8,367.2 452.9,363.5 445.0,364.5 437.2,360.8 429.3,361.6 421.4,357.8 413.6,358.3 405.8,354.5 398.0,354.6 390.2,350.8 382.5,350.7 374.7,346.8 367.0,346.4 359.3,342.6 351.7,341.8 344.0,338.0"/>
<polygon points="335.0,341.1 342.6,345.1 350.1,346.1 357.8,350.2 365.4,350.9 373.0,354.9 380.7,355.3 388.4,359.3 396.2,359.4 403.9,363.4 411.7,363.2 419.5,367.1 427.3,366.6 435.1,370.5 443.0,369.7 450.8,373.5 458.7,372.4 466.6,376.2 474.5,374.8 482.4,378.4 490.4,376.7 498.3,380.3 506.3,378.3 514.3,381.9 522.2,379.6 530.2,383.0 538.2,380.5 546.2,383.8 554.2,381.0 562.2,384.1 570.2,381.3 578.1,385.3 586.1,383.3 594.0,387.3 601.9,385.3 609.9,389.3 617.8,387.3 625.7,391.3 633.7,389.2 641.6,393.2 649.6,391.1 657.5,394.8 665.5,392.5 673.5,396.2 681.4,393.9 689.4,397.6 697.4,395.3 705.3,399.0 713.3,396.7 721.3,400.3 729.2,398.0 737.2,401.7 745.2,398.3 753.2,400.5 761.1,396.8 769.1,399.0 777.0,395.3 785.0,397.5 793.0,393.8 800.9,396.0 808.5,390.7 815.8,390.5 823.2,384.3 830.5,384.1 837.8,377.9 845.1,377.6 852.5,371.4 856.0,372.9 856.0,380.5 852.5,379.0 845.1,385.2 837.8,385.5 830.5,391.7 823.2,391.9 815.8,398.1 808.5,398.3 800.9,403.6 793.0,401.3 785.0,405.0 777.0,402.7 769.1,406.4 761.1,404.1 753.2,407.9 745.2,405.6 737.2,409.0 729.2,405.2 721.3,407.5 713.3,403.8 705.3,406.0 697.4,402.3 689.4,404.6 681.4,400.9 673.5,403.1 665.5,399.4 657.5,401.7 649.6,398.0 641.6,400.0 633.7,395.9 625.7,397.9 617.8,393.9 609.9,395.9 601.9,391.9 594.0,393.9 586.1,389.9 578.1,391.9 570.2,387.9 562.2,390.7 554.2,387.6 546.2,390.4 538.2,387.1 530.2,389.6 522.2,386.1 514.3,388.4 506.3,384.8 498.3,386.8 490.4,383.1 482.4,384.8 474.5,381.0 466.6,382.4 458.7,378.6 450.8,379.6 443.0,375.8 435.1,376.5 427.3,372.6 419.5,373.1 411.7,369.1 403.9,369.2 396.2,365.2 388.4,365.1 380.7,361.0 373.0,360.6 365.4,356.5 357.8,355.7 350.1,351.6 342.6,350.6 335.0,346.5"/>
<polygon points="326.5,347.6 334.0,351.7 336.7,350.9 336.7,356.4 334.0,357.1 326.5,353.0"/>
<polygon points="335.2,350.9 343.1,353.1 351.1,352.3 351.1,357.8 343.1,358.6 335.2,356.4"/>
<polygon points="349.6,356.3 357.1,360.6 364.7,361.5 372.3,365.7 379.9,366.4 387.5,370.6 395.2,371.0 402.9,375.0 410.6,375.1 418.4,379.1 426.1,378.9 433.9,382.9 441.7,382.3 449.6,386.2 457.4,385.3 465.3,389.2 473.2,387.9 481.1,391.7 489.0,390.1 497.0,393.8 504.9,391.9 512.9,395.5 520.8,393.3 528.8,396.8 536.8,394.3 544.8,397.7 552.8,395.0 560.8,398.1 568.8,395.2 576.7,399.3 584.6,397.4 592.6,401.4 600.5,399.5 608.4,403.6 616.3,401.7 624.3,405.8 632.2,403.8 640.1,407.9 648.0,406.0 656.0,409.8 664.0,407.6 671.9,411.3 679.9,409.1 687.8,412.9 695.8,410.7 703.8,414.4 711.7,412.2 719.7,416.0 727.6,413.8 735.6,417.5 743.6,414.4 751.5,416.5 759.5,412.6 767.4,414.8 775.4,410.9 783.3,413.0 791.3,409.2 799.2,411.3 807.2,407.4 815.0,409.2 822.2,402.5 829.3,401.9 836.4,395.2 843.5,394.6 850.6,388.0 857.8,387.3 864.9,380.7 867.7,382.2 867.7,389.8 864.9,388.3 857.8,394.9 850.6,395.6 843.5,402.2 836.4,402.8 829.3,409.5 822.2,410.1 815.0,416.8 807.2,415.0 799.2,418.8 791.3,416.7 783.3,420.5 775.4,418.3 767.4,422.2 759.5,420.0 751.5,423.8 743.6,421.6 735.6,424.8 727.6,421.0 719.7,423.1 711.7,419.3 703.8,421.5 695.8,417.7 687.8,419.9 679.9,416.1 671.9,418.2 664.0,414.4 656.0,416.6 648.0,412.8 640.1,414.7 632.2,410.5 624.3,412.4 616.3,408.3 608.4,410.2 600.5,406.1 592.6,408.0 584.6,404.0 576.7,405.9 568.8,401.8 560.8,404.7 552.8,401.6 544.8,404.3 536.8,400.9 528.8,403.4 520.8,399.8 512.9,402.0 504.9,398.3 497.0,400.2 489.0,396.5 481.1,398.0 473.2,394.1 465.3,395.4 457.4,391.4 449.6,392.3 441.7,388.3 433.9,388.9 426.1,384.8 418.4,385.1 410.6,381.0 402.9,380.9 395.2,376.7 387.5,376.3 379.9,372.1 372.3,371.4 364.7,367.1 357.1,366.1 349.6,361.8"/>
<polygon points="321.5,359.6 329.3,362.8 337.2,362.8 343.6,365.3 343.6,370.8 337.2,368.3 329.3,368.1 321.5,365.0"/>
<polygon points="342.1,367.8 349.6,372.1 357.1,373.3 364.7,377.5 372.2,378.4 379.8,382.6 387.5,383.2 395.1,387.4 402.8,387.6 410.5,391.8 418.3,391.6 426.0,395.7 433.8,395.3 441.6,399.5 449.4,398.6 457.3,402.6 465.2,401.6 473.1,405.4 481.0,404.0 488.9,407.7 496.8,406.0 504.8,409.7 512.7,407.6 520.7,411.2 528.7,408.8 536.6,412.3 544.6,409.6 552.6,413.0 560.6,410.1 568.6,413.2 576.6,411.2 584.5,415.3 592.4,413.4 600.3,417.5 608.3,415.6 616.2,419.7 624.1,417.7 632.0,421.8 640.0,419.9 647.9,423.9 655.8,421.8 663.8,425.5 671.8,423.3 679.7,427.1 687.7,424.9 695.6,428.6 703.6,426.4 711.6,430.2 719.5,428.0 727.5,431.8 735.5,428.3 743.4,430.6 751.4,426.9 759.4,429.1 767.3,425.4 775.3,427.7 783.3,423.9 791.2,426.2 799.2,422.5 807.2,424.8 815.1,421.0 822.7,421.8 829.7,415.1 836.8,414.4 843.9,407.7 851.0,407.0 858.1,400.3 865.2,399.6 872.3,392.9 875.6,394.1 875.6,401.7 872.3,400.5 865.2,407.2 858.1,407.9 851.0,414.6 843.9,415.3 836.8,422.0 829.7,422.7 822.7,429.4 815.1,428.6 807.2,432.3 799.2,430.0 791.2,433.7 783.3,431.4 775.3,435.1 767.3,432.8 759.4,436.5 751.4,434.2 743.4,437.9 735.5,435.5 727.5,438.9 719.5,435.1 711.6,437.3 703.6,433.5 695.6,435.7 687.7,431.9 679.7,434.0 671.8,430.2 663.8,432.4 655.8,428.6 647.9,430.7 640.0,426.6 632.0,428.5 624.1,424.4 616.2,426.3 608.3,422.2 600.3,424.1 592.4,420.0 584.5,421.9 576.6,417.8 568.6,419.8 560.6,416.7 552.6,419.6 544.6,416.2 536.6,418.9 528.7,415.4 520.7,417.7 512.7,414.1 504.8,416.0 496.8,412.3 488.9,413.9 481.0,410.2 473.1,411.4 465.2,407.6 457.3,408.5 449.4,404.7 441.6,405.2 433.8,401.3 426.0,401.7 418.3,397.6 410.5,397.6 402.8,393.4 395.1,393.2 387.5,388.9 379.8,388.3 372.2,384.1 364.7,383.1 357.1,378.8 349.6,377.6 342.1,373.2"/>
<polygon points="316.5,369.6 324.3,373.0 332.1,373.2 339.0,376.1 339.0,381.5 332.1,378.6 324.3,378.3 316.5,375.0"/>
<polygon points="337.5,378.6 345.0,383.1 352.4,384.5 359.9,388.9 367.4,390.0 374.9,394.3 382.5,395.1 390.1,399.7 397.7,400.1 405.4,404.4 413.1,404.4 420.8,408.6 428.6,408.4 436.3,412.5 444.1,412.0 451.9,416.0 459.8,415.1 467.6,419.0 475.5,417.8 483.4,421.6 491.3,420.1 499.3,423.8 507.2,421.9 515.2,425.6 523.1,423.3 531.1,426.9 539.1,424.3 547.1,427.7 555.1,425.0 563.1,428.1 571.1,425.5 579.0,429.7 586.9,427.9 594.8,432.1 602.7,430.3 610.6,434.4 618.5,432.6 626.4,436.8 634.4,434.9 642.3,439.1 650.2,437.2 658.1,441.1 666.1,439.0 674.0,442.8 682.0,440.7 689.9,444.5 697.9,442.4 705.8,446.3 713.8,444.1 721.7,448.0 729.7,445.9 737.6,449.7 745.6,445.9 753.5,447.8 761.4,443.7 769.3,445.5 777.3,441.4 785.2,443.2 793.1,439.1 801.0,441.0 808.9,436.8 816.9,438.7 824.7,434.3 831.4,433.0 838.2,425.7 844.9,424.4 851.6,417.1 858.4,415.7 865.1,408.4 871.9,407.1 878.6,399.8 881.1,401.2 881.1,408.8 878.6,407.4 871.9,414.7 865.1,416.0 858.4,423.3 851.6,424.7 844.9,432.0 838.2,433.3 831.4,440.6 824.7,441.9 816.9,446.3 808.9,444.4 801.0,448.5 793.1,446.6 785.2,450.7 777.3,448.8 769.3,452.9 761.4,451.0 753.5,455.1 745.6,453.2 737.6,457.0 729.7,453.1 721.7,455.2 713.8,451.3 705.8,453.4 697.9,449.5 689.9,451.6 682.0,447.6 674.0,449.7 666.1,445.8 658.1,447.9 650.2,444.0 642.3,445.9 634.4,441.7 626.4,443.5 618.5,439.3 610.6,441.0 602.7,436.9 594.8,438.7 586.9,434.5 579.0,436.3 571.1,432.1 563.1,434.7 555.1,431.6 547.1,434.3 539.1,430.9 531.1,433.5 523.1,429.8 515.2,432.1 507.2,428.3 499.3,430.2 491.3,426.3 483.4,427.8 475.5,423.9 467.6,425.0 459.8,421.1 451.9,421.8 444.1,417.8 436.3,418.2 428.6,414.0 420.8,414.1 413.1,409.9 405.4,409.7 397.7,405.4 390.1,404.9 382.5,400.8 374.9,400.0 367.4,395.6 359.9,394.4 352.4,390.0 345.0,388.6 337.5,384.0"/>
<polygon points="311.5,379.3 319.2,382.8 327.0,383.3 331.4,385.3 331.4,390.7 327.0,388.7 319.2,388.2 311.5,384.5"/>
<polygon points="329.9,387.9 337.2,392.6 344.5,394.3 351.9,398.9 359.3,400.6 366.7,405.2 374.2,406.2 381.8,410.8 389.3,411.5 396.9,415.9 404.5,416.4 412.2,420.7 419.8,420.9 427.5,425.1 435.3,424.9 443.0,429.1 450.8,428.5 458.6,432.6 466.5,431.6 474.3,435.6 482.2,434.4 490.1,438.2 498.0,436.6 506.0,440.3 513.9,438.4 521.9,442.0 529.9,439.7 537.8,443.2 545.8,440.6 553.8,443.9 561.8,441.1 569.8,444.3 577.7,442.5 585.6,446.7 593.5,444.9 601.5,449.1 609.4,447.3 617.3,451.4 625.2,449.6 633.1,453.8 641.0,451.9 648.9,456.1 656.9,454.0 664.8,457.8 672.8,455.7 680.7,459.5 688.7,457.4 696.6,461.3 704.6,459.1 712.5,463.0 720.5,460.9 728.4,464.7 736.4,462.6 744.3,465.4 752.3,461.7 760.3,464.0 768.3,460.3 776.2,462.6 784.2,458.9 792.2,461.2 800.1,457.5 808.1,459.8 815.6,454.1 823.1,454.2 830.5,448.3 838.0,448.4 845.4,442.4 852.9,442.5 860.3,436.6 866.2,437.3 866.2,444.9 860.3,444.2 852.9,450.1 845.4,450.0 838.0,456.0 830.5,455.9 823.1,461.8 815.6,461.7 808.1,467.4 800.1,465.0 792.2,468.7 784.2,466.4 776.2,470.0 768.3,467.7 760.3,471.4 752.3,469.0 744.3,472.7 736.4,469.8 728.4,471.9 720.5,468.0 712.5,470.1 704.6,466.2 696.6,468.3 688.7,464.4 680.7,466.5 672.8,462.6 664.8,464.7 656.9,460.8 648.9,462.9 641.0,458.7 633.1,460.5 625.2,456.3 617.3,458.1 609.4,453.9 601.5,455.7 593.5,451.5 585.6,453.3 577.7,449.1 569.8,450.9 561.8,447.7 553.8,450.5 545.8,447.2 537.8,449.8 529.9,446.3 521.9,448.5 513.9,444.9 506.0,446.7 498.0,442.9 490.1,444.4 482.2,440.5 474.3,441.7 466.5,437.6 458.6,438.5 450.8,434.3 443.0,434.8 435.3,430.5 427.5,430.7 419.8,426.4 412.2,426.1 404.5,421.8 396.9,421.2 389.3,416.7 381.8,415.9 374.2,411.3 366.7,410.2 359.3,405.5 351.9,404.4 344.5,399.7 337.2,398.0 329.9,393.3"/>
<polygon points="303.0,387.7 310.5,391.8 318.1,393.0 325.8,396.3 325.8,401.7 318.1,398.3 310.5,397.1 303.0,392.9"/>
<polygon points="324.7,399.0 331.9,404.3 339.1,406.3 346.3,411.2 353.6,412.8 360.9,417.7 368.3,419.0 375.7,423.8 383.2,424.8 390.7,429.4 398.2,430.3 405.8,434.7 413.4,435.2 421.0,439.6 428.7,439.7 436.4,444.1 444.1,443.8 451.9,448.1 459.7,447.4 467.5,451.5 475.3,450.6 483.2,454.6 491.1,453.2 499.0,457.1 506.9,455.3 514.8,459.1 522.8,457.0 530.8,460.7 538.7,458.2 546.7,461.6 554.7,458.9 562.7,462.1 570.7,459.4 578.6,463.5 586.6,461.6 594.5,465.7 602.4,463.8 610.3,467.9 618.3,466.0 626.2,470.0 634.1,468.1 642.0,472.2 650.0,470.2 657.9,474.0 665.9,471.7 673.8,475.5 681.8,473.3 689.8,477.1 697.7,474.9 705.7,478.6 713.7,476.4 721.6,480.2 729.6,478.0 737.5,481.7 745.5,478.4 753.5,480.7 761.5,477.1 769.4,479.5 777.4,475.8 785.4,478.2 793.4,474.6 801.3,476.9 809.0,471.7 816.4,471.8 823.8,465.9 831.3,465.9 838.7,460.0 846.2,460.0 853.6,454.1 858.2,455.3 858.2,462.9 853.6,461.7 846.2,467.6 838.7,467.6 831.3,473.5 823.8,473.5 816.4,479.4 809.0,479.3 801.3,484.5 793.4,482.1 785.4,485.7 777.4,483.3 769.4,486.9 761.5,484.5 753.5,488.0 745.5,485.6 737.5,489.0 729.6,485.2 721.6,487.3 713.7,483.5 705.7,485.7 697.7,481.9 689.8,484.1 681.8,480.3 673.8,482.4 665.9,478.6 657.9,480.8 650.0,477.0 642.0,478.9 634.1,474.8 626.2,476.7 618.3,472.6 610.3,474.5 602.4,470.4 594.5,472.3 586.6,468.2 578.6,470.1 570.7,466.0 562.7,468.7 554.7,465.5 546.7,468.2 538.7,464.8 530.8,467.3 522.8,463.5 514.8,465.6 506.9,461.7 499.0,463.4 491.1,459.5 483.2,460.7 475.3,456.7 467.5,457.5 459.7,453.3 451.9,453.9 444.1,449.5 436.4,449.8 428.7,445.3 421.0,445.2 413.4,440.6 405.8,440.1 398.2,435.6 390.7,434.7 383.2,430.0 375.7,428.8 368.3,424.0 360.9,422.6 353.6,417.7 346.3,415.9 339.1,411.0 331.9,408.9 324.7,404.4"/>
<polygon points="300.0,397.7 307.4,402.6 314.9,403.9 320.7,406.9 320.7,411.4 314.9,408.4 307.4,406.9 300.0,402.9"/>
<polygon points="319.2,409.5 326.2,414.7 333.2,417.1 340.3,422.3 347.4,424.4 354.5,429.6 361.7,431.4 369.0,436.4 376.3,438.0 383.6,442.8 391.0,444.0 398.4,448.9 405.9,449.7 413.4,454.5 421.0,455.0 428.6,459.6 436.2,459.8 443.9,464.2 451.6,464.0 459.3,468.4 467.1,467.8 474.9,472.1 482.7,471.0 490.6,475.2 498.5,473.7 506.4,477.6 514.3,475.8 522.3,479.6 530.2,477.5 538.2,481.0 546.2,478.5 554.2,481.9 562.2,479.0 570.2,482.3 578.1,480.1 586.1,483.9 594.0,481.7 602.0,485.5 610.0,483.3 617.9,487.1 625.9,484.8 633.8,488.6 641.8,486.4 649.8,490.1 657.7,487.7 665.7,491.2 673.7,488.7 681.7,492.2 689.7,489.7 697.7,493.2 705.6,490.7 713.6,493.9 721.6,490.9 729.6,493.9 737.6,490.9 745.6,493.9 753.6,490.8 761.6,493.8 769.6,490.8 777.6,493.8 785.6,490.8 793.4,492.3 801.0,486.7 808.6,487.2 816.2,481.6 823.8,482.1 831.3,476.6 838.9,477.1 846.5,471.5 848.4,473.9 848.4,481.5 846.5,479.1 838.9,484.7 831.3,484.2 823.8,489.7 816.2,489.2 808.6,494.8 801.0,494.3 793.4,499.8 785.6,498.2 777.6,501.2 769.6,498.2 761.6,501.2 753.6,498.2 745.6,501.1 737.6,498.1 729.6,501.1 721.6,498.1 713.6,501.1 705.6,497.8 697.7,500.3 689.7,496.7 681.7,499.2 673.7,495.6 665.7,498.1 657.7,494.5 649.8,497.0 641.8,493.2 633.8,495.3 625.9,491.5 617.9,493.7 610.0,489.9 602.0,492.1 594.0,488.3 586.1,490.5 578.1,486.7 570.2,488.9 562.2,485.6 554.2,488.5 546.2,485.1 538.2,487.6 530.2,484.1 522.3,486.1 514.3,482.3 506.4,484.0 498.5,480.0 490.6,481.4 482.7,477.1 474.9,478.1 467.1,473.7 459.3,474.3 451.6,469.9 443.9,470.0 436.2,465.4 428.6,465.2 421.0,460.5 413.4,460.0 405.9,455.1 398.4,454.2 391.0,449.2 383.6,448.0 376.3,443.0 369.0,441.4 361.7,436.3 354.5,434.4 347.4,429.2 340.3,427.1 333.2,421.8 326.2,419.3 319.2,414.0"/>
<polygon points="295.0,408.2 302.3,412.8 309.7,414.5 316.1,418.0 316.1,422.5 309.7,418.9 302.3,417.2 295.0,412.4"/>
<polygon points="314.6,420.6 321.5,426.1 328.3,428.7 335.2,434.1 342.3,436.5 349.3,441.8 356.4,443.9 363.5,449.1 370.7,450.9 377.9,456.0 385.2,457.4 392.5,462.6 399.9,463.6 407.3,468.6 414.8,469.4 422.3,474.1 429.9,474.6 437.5,479.2 445.1,479.3 452.8,483.9 460.5,483.4 468.3,487.9 476.1,487.1 483.9,491.4 491.7,490.3 499.6,494.3 507.5,492.8 515.4,496.6 523.4,494.6 531.3,498.4 539.3,496.0 547.3,499.6 555.3,496.9 563.3,500.1 571.3,497.4 579.2,501.2 587.2,499.0 595.1,502.8 603.1,500.6 611.1,504.4 619.0,502.2 627.0,506.0 634.9,503.7 642.9,507.5 650.9,505.2 658.9,508.7 666.8,506.2 674.8,509.8 682.8,507.3 690.8,510.8 698.8,508.3 706.7,511.8 714.7,508.9 722.7,511.9 730.7,508.9 738.7,511.9 746.7,508.9 754.7,511.8 762.7,508.8 770.7,511.8 778.7,508.8 786.4,509.5 794.1,504.2 801.7,504.8 809.4,499.5 817.0,500.1 824.7,494.8 832.3,495.5 836.5,491.2 836.5,498.8 832.3,503.1 824.7,502.4 817.0,507.7 809.4,507.1 801.7,512.4 794.1,511.7 786.4,517.0 778.7,516.2 770.7,519.2 762.7,516.2 754.7,519.2 746.7,516.1 738.7,519.1 730.7,516.1 722.7,519.1 714.7,516.1 706.7,518.9 698.8,515.3 690.8,517.8 682.8,514.2 674.8,516.7 666.8,513.1 658.9,515.6 650.9,512.0 642.9,514.3 634.9,510.5 627.0,512.6 619.0,508.8 611.1,511.0 603.1,507.2 595.1,509.4 587.2,505.6 579.2,507.8 571.3,504.0 563.3,506.7 555.3,503.5 547.3,506.2 539.3,502.6 531.3,505.0 523.4,501.2 515.4,503.1 507.5,499.1 499.6,500.6 491.7,496.5 483.9,497.5 476.1,493.2 468.3,493.9 460.5,489.4 452.8,489.7 445.1,485.0 437.5,484.9 429.9,480.2 422.3,479.7 414.8,474.8 407.3,473.9 399.9,468.9 392.5,467.8 385.2,462.6 377.9,461.1 370.7,455.9 363.5,454.0 356.4,448.8 349.3,446.6 342.3,441.2 335.2,438.8 328.3,433.3 321.5,430.6 314.6,425.1"/>
<polygon points="285.0,419.2 292.1,424.3 299.1,426.6 306.3,431.6 313.6,433.4 315.5,435.5 315.5,440.0 313.6,437.8 306.3,436.0 299.1,430.9 292.1,428.6 285.0,423.4"/>
<polygon points="314.0,438.1 320.8,443.7 327.6,446.4 334.5,451.8 341.5,454.3 348.5,459.6 355.6,461.7 362.7,467.0 369.8,468.9 377.1,474.0 384.3,475.6 391.6,480.6 399.0,481.8 406.4,486.8 413.8,487.6 421.3,492.4 428.9,493.0 436.5,497.6 444.1,497.7 451.8,502.3 459.5,502.0 467.2,506.5 475.0,505.7 482.8,510.0 490.6,508.9 498.5,513.0 506.4,511.6 514.3,515.4 522.3,513.5 530.2,517.3 538.2,514.9 546.2,518.5 554.1,515.8 562.1,519.0 570.1,516.3 578.1,520.0 586.1,517.7 594.0,521.4 602.0,519.1 610.0,522.8 618.0,520.5 625.9,524.1 633.9,521.8 641.9,525.5 649.8,523.2 657.8,526.8 665.8,524.4 673.8,528.0 681.7,525.6 689.7,529.3 697.7,526.9 705.7,529.8 713.7,526.5 721.7,529.3 729.7,526.0 737.7,528.8 745.7,525.5 753.7,528.3 761.7,525.0 769.6,527.6 777.3,522.5 785.1,523.4 792.8,518.3 800.5,519.1 808.2,514.0 815.9,514.9 823.7,509.8 823.7,517.4 815.9,522.5 808.2,521.6 800.5,526.7 792.8,525.8 785.1,530.9 777.3,529.9 769.6,535.0 761.7,532.4 753.7,535.6 745.7,532.8 737.7,536.0 729.7,533.2 721.7,536.4 713.7,533.6 705.7,536.9 697.7,533.9 689.7,536.3 681.7,532.6 673.8,534.9 665.8,531.3 657.8,533.6 649.8,530.0 641.9,532.3 633.9,528.5 625.9,530.8 618.0,527.1 610.0,529.4 602.0,525.7 594.0,528.0 586.1,524.3 578.1,526.6 570.1,522.9 562.1,525.6 554.1,522.4 546.2,525.1 538.2,521.5 530.2,523.9 522.3,520.0 514.3,521.9 506.4,517.9 498.5,519.3 490.6,515.2 482.8,516.2 475.0,511.8 467.2,512.5 459.5,507.9 451.8,508.1 444.1,503.5 436.5,503.3 428.9,498.6 421.3,498.0 413.8,493.0 406.4,492.2 399.0,487.1 391.6,485.8 384.3,480.7 377.1,479.1 369.8,473.9 362.7,472.0 355.6,466.6 348.5,464.4 341.5,459.0 334.5,456.5 327.6,451.0 320.8,448.2 314.0,442.6"/>
<polygon points="279.0,429.2 286.7,432.7 290.9,432.9 290.9,437.2 286.7,437.0 279.0,433.4"/>
<polygon points="289.4,436.9 296.3,442.2 303.5,444.4 310.8,448.8 310.8,453.2 303.5,448.7 296.3,446.5 289.4,441.2"/>
<polygon points="310.1,451.7 316.7,457.6 323.3,460.6 330.1,466.2 336.8,469.0 343.6,474.7 350.6,477.1 357.5,482.7 364.5,484.9 371.6,490.3 378.6,492.2 385.8,497.6 391.4,498.3 391.4,503.5 385.8,502.7 378.6,497.3 371.6,495.3 364.5,489.9 357.5,487.6 350.6,481.9 343.6,479.4 336.8,473.7 330.1,470.8 323.3,465.1 316.7,462.1 310.1,456.1"/>
<polygon points="406.2,505.0 413.6,510.0 421.0,510.9 428.5,515.9 436.0,516.4 443.6,521.3 451.2,521.3 458.9,526.0 466.5,525.7 474.3,530.2 482.1,529.5 489.9,533.8 497.7,532.6 505.6,536.8 513.5,535.1 521.4,539.1 529.3,537.1 537.3,540.7 545.3,538.4 553.3,541.8 561.3,539.0 569.3,542.2 577.3,539.6 585.3,543.0 593.2,540.4 601.2,543.8 609.2,541.2 617.2,544.6 625.2,542.0 633.2,545.3 641.2,542.7 649.2,546.1 657.2,543.4 665.2,546.6 673.2,543.8 681.2,547.1 689.2,544.3 697.1,547.6 705.1,544.8 713.1,547.9 721.1,544.9 729.1,547.9 737.1,544.9 745.1,547.9 753.1,544.8 761.1,547.3 768.8,542.3 776.6,543.4 784.4,538.4 792.1,539.5 799.9,534.5 807.6,535.5 810.6,531.8 810.6,539.4 807.6,543.1 799.9,542.1 792.1,547.0 784.4,545.9 776.6,550.8 768.8,549.7 761.1,554.7 753.1,552.2 745.1,555.1 737.1,552.1 729.1,555.1 721.1,552.1 713.1,555.1 705.1,551.9 697.1,554.6 689.2,551.3 681.2,554.1 673.2,550.8 665.2,553.5 657.2,550.2 649.2,552.9 641.2,549.5 633.2,552.1 625.2,548.7 617.2,551.2 609.2,547.8 601.2,550.4 593.2,547.0 585.3,549.6 577.3,546.2 569.3,548.8 561.3,545.6 553.3,548.4 545.3,545.0 537.3,547.3 529.3,543.7 521.4,545.6 513.5,541.6 505.6,543.2 497.7,538.9 489.9,540.0 482.1,535.6 474.3,536.2 466.5,531.7 458.9,531.9 451.2,527.1 443.6,527.0 436.0,522.0 428.5,521.5 421.0,516.5 413.6,515.5 406.2,510.3"/>
<polygon points="274.0,439.2 281.2,444.1 288.4,446.0 288.4,450.3 281.2,448.4 274.0,443.4"/>
<polygon points="288.0,450.5 294.9,456.1 301.9,458.5 309.2,463.2 309.2,467.6 301.9,462.8 294.9,460.4 288.0,454.8"/>
<polygon points="308.2,466.1 314.6,472.2 321.2,475.4 327.8,481.3 334.3,484.4 341.0,490.2 347.8,493.0 354.6,498.8 361.4,501.2 368.4,506.8 374.1,508.3 374.1,513.4 368.4,511.8 361.4,506.2 354.6,503.6 347.8,497.7 341.0,495.0 334.3,489.1 327.8,485.9 321.2,479.9 314.6,476.7 308.2,470.5"/>
<polygon points="388.4,515.8 395.5,521.3 402.7,522.9 410.0,528.1 417.3,529.3 424.6,534.5 432.1,535.2 439.5,540.3 447.1,540.7 454.7,545.5 462.3,545.5 470.0,550.2 477.7,549.6 485.4,554.3 493.3,553.2 501.1,557.5 509.0,556.2 516.9,560.2 524.8,558.4 532.7,562.2 540.7,559.9 548.7,563.6 556.7,560.8 564.7,564.1 572.7,561.4 580.6,564.8 588.6,562.2 596.6,565.6 604.6,563.0 612.6,566.4 620.6,563.8 628.6,567.1 636.6,564.3 644.6,567.5 652.6,564.7 660.6,567.9 668.6,565.0 676.6,567.8 684.6,564.5 692.6,567.2 700.6,563.9 708.5,566.6 716.5,563.3 724.5,566.1 732.5,562.4 740.4,564.2 748.3,560.1 756.3,561.9 764.2,557.8 772.1,559.6 780.0,555.5 787.9,557.3 795.9,553.2 795.9,560.7 787.9,564.8 780.0,562.9 772.1,567.1 764.2,565.2 756.3,569.3 748.3,567.4 740.4,571.5 732.5,569.6 724.5,573.2 716.5,570.5 708.5,573.7 700.6,571.0 692.6,574.2 684.6,571.5 676.6,574.7 668.6,571.9 660.6,574.7 652.6,571.5 644.6,574.3 636.6,571.1 628.6,573.8 620.6,570.4 612.6,573.0 604.6,569.6 596.6,572.2 588.6,568.8 580.6,571.4 572.7,568.0 564.7,570.7 556.7,567.4 548.7,570.2 540.7,566.5 532.7,568.8 524.8,565.0 516.9,566.7 509.0,562.6 501.1,563.9 493.3,559.4 485.4,560.4 477.7,555.7 470.0,556.2 462.3,551.5 454.7,551.4 447.1,546.4 439.5,546.0 432.1,540.8 424.6,540.1 417.3,534.8 410.0,533.5 402.7,528.2 395.5,526.6 388.4,521.0"/>
<polygon points="627.0,307.2 634.8,311.8 642.6,310.5 650.4,315.2 658.3,313.9 666.1,318.2 674.0,316.5 681.9,320.8 689.8,319.0 697.8,322.3 705.8,319.6 713.8,322.8 721.7,319.1 729.6,320.6 737.5,316.2 744.8,316.0 751.9,309.4 757.0,309.8 757.0,317.2 751.9,316.7 744.8,323.3 737.5,323.4 729.6,327.8 721.7,326.2 713.8,329.9 705.8,326.6 697.8,329.3 689.8,326.0 681.9,327.8 674.0,323.5 666.1,325.1 658.3,320.8 650.4,322.0 642.6,317.3 634.8,318.6 627.0,313.8"/>
<polygon points="269.0,449.2 276.0,454.5 283.0,456.9 287.0,459.9 287.0,464.2 283.0,461.2 276.0,458.8 269.0,453.4"/>
<polygon points="285.5,462.5 292.3,468.2 299.2,470.9 306.2,476.1 308.3,475.7 308.3,480.1 306.2,480.5 299.2,475.2 292.3,472.5 285.5,466.8"/>
<polygon points="306.8,479.7 313.0,486.1 319.2,489.7 325.4,496.1 331.7,499.7 337.9,506.2 344.1,509.7 347.0,513.5 347.0,518.3 344.1,514.4 337.9,510.9 331.7,504.4 325.4,500.7 319.2,494.2 313.0,490.6 306.8,484.1"/>
<polygon points="358.8,521.4 365.0,528.1 371.2,531.4 377.4,538.2 383.6,541.3 389.9,548.2 396.1,551.3 402.3,558.3 408.5,561.3 414.7,568.3 420.9,571.2 427.2,578.4 432.0,580.1 432.0,585.7 427.2,584.0 420.9,576.7 414.7,573.8 408.5,566.7 402.3,563.6 396.1,556.6 389.9,553.4 383.6,546.5 377.4,543.2 371.2,536.4 365.0,533.1 358.8,526.3"/>
<polygon points="263.0,458.2 269.9,463.6 276.8,466.3 283.8,471.4 286.0,471.0 286.0,475.3 283.8,475.7 276.8,470.6 269.9,467.9 263.0,462.4"/>
<polygon points="284.5,475.0 291.5,480.4 298.4,482.9 305.2,487.3 305.2,491.7 298.4,487.2 291.5,484.7 284.5,479.3"/>
<polygon points="303.7,489.9 310.0,496.2 316.3,499.7 322.6,506.0 328.9,509.5 334.8,515.5 334.8,520.1 328.9,514.1 322.6,510.5 316.3,504.2 310.0,500.6 303.7,494.2"/>
<polygon points="346.8,523.2 353.1,529.7 359.4,533.0 365.7,539.5 372.0,542.7 378.3,549.4 384.6,552.5 390.9,559.2 397.2,562.2 403.5,569.0 409.0,571.3 409.0,576.7 403.5,574.4 397.2,567.5 390.9,564.4 384.6,557.6 378.3,554.5 372.0,547.7 365.7,544.5 359.4,537.9 353.1,534.5 346.8,528.0"/>
<polygon points="261.0,470.2 267.9,475.6 274.8,478.2 281.9,483.3 284.2,482.8 284.2,487.1 281.9,487.6 274.8,482.5 267.9,479.9 261.0,474.5"/>
<polygon points="282.7,486.8 289.6,492.2 296.6,494.6 303.4,499.0 303.4,503.4 296.6,498.9 289.6,496.5 282.7,491.1"/>
<polygon points="301.9,501.6 308.3,507.9 314.6,511.3 320.9,517.6 327.3,521.0 327.3,525.6 320.9,522.1 314.6,515.8 308.3,512.3 301.9,505.9"/>
<polygon points="340.4,531.0 346.8,537.4 353.1,540.6 359.5,547.1 365.8,550.3 372.1,556.9 378.5,559.9 384.8,566.6 391.0,569.4 391.0,574.7 384.8,571.8 378.5,565.0 372.1,561.9 365.8,555.3 359.5,552.0 353.1,545.5 346.8,542.1 340.4,535.7"/>
<polygon points="254.0,481.1 260.8,486.7 267.7,489.4 274.6,494.9 281.7,497.0 281.7,501.3 274.6,499.2 267.7,493.7 260.8,491.0 254.0,485.4"/>
<polygon points="280.9,501.3 287.9,506.5 295.0,508.8 302.0,513.3 302.0,517.6 295.0,513.1 287.9,510.8 280.9,505.6"/>
<polygon points="300.5,515.9 306.9,522.1 313.3,525.4 319.7,531.6 319.7,536.1 313.3,529.9 306.9,526.4 300.5,520.2"/>
<polygon points="332.3,539.5 338.7,545.7 345.1,549.0 351.5,555.3 357.9,558.5 364.3,564.9 369.0,566.6 369.0,571.6 364.3,569.8 357.9,563.3 351.5,560.1 345.1,553.8 338.7,550.4 332.3,544.2"/>
<polygon points="249.0,491.1 255.9,496.7 262.7,499.3 269.6,504.8 276.5,507.4 282.4,511.6 282.4,515.9 276.5,511.7 269.6,509.1 262.7,503.6 255.9,501.0 249.0,495.4"/>
<polygon points="280.9,514.2 288.0,519.2 295.3,521.2 299.5,524.0 299.5,528.4 295.3,525.5 288.0,523.5 280.9,518.5"/>
<polygon points="298.0,526.6 304.5,532.7 311.0,536.0 312.7,538.6 312.7,543.1 311.0,540.4 304.5,537.1 298.0,530.9"/>
<polygon points="322.5,544.3 329.0,550.3 335.5,553.6 341.9,559.7 347.0,561.8 347.0,566.6 341.9,564.4 335.5,558.2 329.0,554.9 322.5,548.8"/>
<polygon points="244.0,501.1 250.8,506.7 257.6,509.5 264.5,515.1 271.3,517.8 278.3,523.0 280.3,522.4 280.3,526.7 278.3,527.3 271.3,522.1 264.5,519.4 257.6,513.8 250.8,511.0 244.0,505.4"/>
<polygon points="278.8,526.4 285.9,531.4 293.2,533.5 297.7,536.5 297.7,540.8 293.2,537.8 285.9,535.7 278.8,530.7"/>
<polygon points="296.2,539.1 302.6,545.2 306.1,546.3 306.1,550.6 302.6,549.5 296.2,543.4"/>
<polygon points="316.0,553.5 321.0,558.4 321.0,563.0 316.0,557.9"/>
<polygon points="239.0,510.1 245.9,515.5 252.9,518.1 259.9,523.4 266.8,525.9 273.8,531.3 278.3,531.6 278.3,535.9 273.8,535.6 266.8,530.2 259.9,527.7 252.9,522.4 245.9,519.8 239.0,514.4"/>
<polygon points="276.8,535.6 284.1,540.3 291.5,542.0 296.0,544.9 296.0,549.2 291.5,546.3 284.1,544.6 276.8,539.9"/>
<polygon points="294.5,547.5 297.0,550.6 297.0,554.9 294.5,551.8"/>
<polygon points="543.0,621.2 549.7,619.9 556.5,612.5 563.2,611.2 569.9,603.9 577.3,608.6 584.6,607.7 591.0,605.9 597.4,598.0 603.7,596.2 610.3,589.6 617.9,595.1 624.9,590.5 631.6,589.1 638.3,581.6 646.1,583.6 654.1,580.1 662.1,582.5 670.0,579.0 678.0,581.4 686.0,577.9 694.0,580.3 702.0,577.1 710.0,580.3 718.0,577.5 726.0,580.7 734.0,577.9 742.0,581.1 749.9,578.3 757.9,581.5 765.9,578.7 769.0,581.8 769.0,589.2 765.9,586.1 757.9,588.9 749.9,585.6 742.0,588.4 734.0,585.1 726.0,587.9 718.0,584.6 710.0,587.4 702.0,584.1 694.0,587.3 686.0,584.9 678.0,588.4 670.0,585.9 662.1,589.4 654.1,586.9 646.1,590.4 638.3,588.4 631.6,595.8 624.9,597.2 617.9,601.8 610.3,596.2 603.7,602.8 597.4,604.6 591.0,612.5 584.6,614.3 577.3,615.2 569.9,610.5 563.2,617.8 556.5,619.1 549.7,626.5 543.0,627.8"/>
<polygon points="593.0,647.2 599.2,645.2 605.4,637.1 611.7,635.1 617.9,627.0 624.1,625.0 630.3,616.9 636.8,617.0 643.9,617.6 650.8,619.6 657.4,612.1 664.1,610.7 671.9,607.4 679.9,610.7 687.9,608.0 695.9,611.4 703.9,608.7 711.8,611.2 719.5,606.3 727.3,607.3 735.1,602.4 742.8,603.4 750.6,598.4 757.0,599.8 757.0,607.2 750.6,605.8 742.8,610.7 735.1,609.6 727.3,614.5 719.5,613.4 711.8,618.4 703.9,615.8 695.9,618.4 687.9,615.0 679.9,617.7 671.9,614.3 664.1,617.5 657.4,619.0 650.8,626.4 643.9,624.3 636.8,623.7 630.3,623.7 624.1,631.7 617.9,633.7 611.7,641.7 605.4,643.7 599.2,651.8 593.0,653.8"/>
<polygon points="629.0,655.1 635.1,653.0 641.3,644.9 647.5,643.4 654.7,643.9 660.9,644.4 666.7,635.8 672.5,633.3 678.7,626.5 686.4,631.6 694.2,630.8 701.0,630.1 707.8,622.8 714.5,621.5 721.7,618.9 729.0,624.9 736.8,619.9 744.6,621.0 749.0,616.9 749.0,624.1 744.6,628.2 736.8,627.2 729.0,632.1 721.7,626.0 714.5,628.7 707.8,629.9 701.0,637.2 694.2,637.8 686.4,638.6 678.7,633.5 672.5,640.2 666.7,642.7 660.9,651.2 654.7,650.7 647.5,650.2 641.3,651.6 635.1,659.7 629.0,661.9"/>
<polygon points="655.0,693.1 660.4,690.1 665.7,681.2 671.1,678.2 676.5,669.3 681.8,666.4 687.2,657.4 692.6,654.5 698.7,655.6 704.8,660.2 710.5,651.5 716.1,648.8 722.1,649.4 728.9,653.5 736.4,647.8 739.0,649.9 739.0,657.1 736.4,655.0 728.9,660.7 722.1,656.5 716.1,655.9 710.5,658.6 704.8,667.2 698.7,662.6 692.6,661.5 687.2,664.4 681.8,673.3 676.5,676.2 671.1,685.2 665.7,688.1 660.4,697.0 655.0,699.9"/>
</g><g clip-path="url(#cg)" fill="none" stroke="url(#nb)">
<polyline points="544.4,640.6 549.6,635.4" stroke-width="5"/>
<polyline points="545.4,654.6 550.6,649.4" stroke-width="5"/>
<polyline points="545.4,668.6 550.6,663.4" stroke-width="5"/>
<polyline points="586.0,675.4 596.8,664.6" stroke-width="5"/>
<polyline points="587.1,691.9 592.9,686.1" stroke-width="5"/>
<polyline points="588.1,707.9 593.9,702.1" stroke-width="5"/>
<polyline points="625.0,682.0 635.0,672.0" stroke-width="5"/>
<polyline points="619.7,705.7 630.3,695.1" stroke-width="5"/>
<polyline points="621.4,723.6 626.6,718.4" stroke-width="5"/>
<polyline points="624.4,741.6 629.6,736.4" stroke-width="5"/>
<polyline points="650.6,721.2 660.2,711.6" stroke-width="5"/>
<polyline points="554.9,695.1 563.1,686.9" stroke-width="5"/>
<polyline points="601.5,736.1 609.7,727.9" stroke-width="5"/>
<polyline points="591.4,671.6 598.6,664.4" stroke-width="5"/>
<polyline points="625.7,681.3 634.3,672.7" stroke-width="5"/>
</g>
</svg>
</div>

<div id="tb"></div><div id="ttl">Voxino</div>
<svg width="1922" height="40" viewBox="0 0 1922 40" style="position:absolute;left:0;top:0">
<defs><linearGradient id="ig" x1="0" y1="0" x2="0.6" y2="1"><stop offset="0" stop-color="#4f86c6"/><stop offset="0.35" stop-color="#3f9a8c"/><stop offset="1" stop-color="#58b05a"/></linearGradient>
<linearGradient id="ig2" x1="0" y1="0" x2="0" y2="1"><stop offset="0" stop-color="#3f7fd0"/><stop offset="1" stop-color="#5cb85c"/></linearGradient></defs>
<rect x="10.8" y="11.6" width="17.4" height="13.6" rx="0.8" fill="#fbfbfc" stroke="#a9b1c2" stroke-width="1"/>
<rect x="11.3" y="11.3" width="16.4" height="1.2" fill="#8e9ab8" opacity="0.6"/>
<rect x="12.3" y="14.2" width="7.6" height="9.6" fill="url(#ig)"/>
<rect x="21" y="14.2" width="4.2" height="9.6" fill="#e9ebe9"/>
<rect x="25.9" y="14.2" width="1.5" height="6" fill="url(#ig2)"/>
<path d="M1768 18.5H1780" stroke="#111" stroke-width="1.1" fill="none"/>
<rect x="1826.5" y="13.5" width="11" height="11" rx="1.6" fill="none" stroke="#c6c6c8" stroke-width="1"/>
<path d="M1885 13L1896.7 24.7M1896.7 13L1885 24.7" stroke="#111" stroke-width="1.1" fill="none"/>
</svg>

<div class="p" style="left:1px;top:38px;width:389px;height:832px"></div>
<div class="t" style="left:1px;top:38px;width:164px;height:19px"></div><svg width="1922" height="1119" style="pointer-events:none" viewBox="0 0 1922 1119"><rect x="9" y="43" width="8" height="2" fill="#f4f4f4"/><path d="M9 46.2h8l-4 6.3z" fill="#f4f4f4"/></svg><div class="m " style="left:27px;top:42px">Performance</div>
<div class="t" style="left:166px;top:38px;width:224px;height:19px"></div><svg width="1922" height="1119" style="pointer-events:none" viewBox="0 0 1922 1119"><rect x="174" y="43" width="8" height="2" fill="#f4f4f4"/><path d="M174 46.2h8l-4 6.3z" fill="#f4f4f4"/></svg><div class="m " style="left:192px;top:42px">Ray Iterations</div>
<div class="vb" style="left:164px;top:38px;width:2px;height:136px"></div><div class="vb" style="left:1px;top:174px;width:389px;height:2px"></div><div class="vb" style="left:389px;top:38px;width:2px;height:832px;background:#2c2b3c"></div>
<div class="m " style="left:46px;top:66px">FPS: 234.2</div><div class="m " style="left:174px;top:66px">Rays: 5127425</div><svg width="1922" height="1119" viewBox="0 0 1922 1119"><path d="M13 85.5H104.5L106 100L107.5 85.5H152" fill="none" stroke="#8e8e90" stroke-width="1"/></svg>
<div class="t" style="left:1px;top:176px;width:389px;height:19px"></div><svg width="1922" height="1119" style="pointer-events:none" viewBox="0 0 1922 1119"><rect x="9" y="181" width="8" height="2" fill="#f4f4f4"/><path d="M9 184.2h8l-4 6.3z" fill="#f4f4f4"/></svg><div class="m " style="left:27px;top:180px">Scene Selector</div>
<div class="ln" style="left:9px;top:226px;width:136px"></div><div class="ln" style="left:245px;top:226px;width:136px"></div><div class="m " style="left:153px;top:221px">Game related</div>
<div class="b" style="left:9px;top:237px;width:120px"></div><div class="m " style="left:13px;top:241px">Exit application</div>
<div class="ln" style="left:9px;top:283px;width:150px"></div><div class="ln" style="left:231px;top:283px;width:150px"></div><div class="m " style="left:167px;top:278px">Polygons</div>
<div class="b" style="left:9px;top:294px;width:148px"></div><div class="m " style="left:13px;top:298px">Single Chunk Culling</div>
<div class="b" style="left:9px;top:317px;width:134px"></div><div class="m " style="left:13px;top:321px">Single Chunk Naive</div>
<div class="b" style="left:9px;top:340px;width:141px"></div><div class="m " style="left:13px;top:344px">Single Chunk Greedy</div>
<div class="b" style="left:9px;top:363px;width:190px"></div><div class="m " style="left:13px;top:367px">Single Chunk Binary Greedy</div>
<div class="b" style="left:9px;top:386px;width:176px"></div><div class="m " style="left:13px;top:390px">Single Chunk Culling GPU</div>
<div class="b" style="left:9px;top:409px;width:141px"></div><div class="m " style="left:13px;top:413px">Multi Chunk Culling</div>
<div class="b" style="left:9px;top:432px;width:127px"></div><div class="m " style="left:13px;top:436px">Multi Chunk Naive</div>
<div class="b" style="left:9px;top:455px;width:134px"></div><div class="m " style="left:13px;top:459px">Multi Chunk Greedy</div>
<div class="b" style="left:9px;top:478px;width:183px"></div><div class="m " style="left:13px;top:482px">Multi Chunk Binary Greedy</div>
<div class="b" style="left:9px;top:501px;width:169px"></div><div class="m " style="left:13px;top:505px">Multi Chunk Culling GPU</div>
<div class="ln" style="left:9px;top:547px;width:153px"></div><div class="ln" style="left:227px;top:547px;width:154px"></div><div class="m " style="left:170px;top:542px">Raycast</div>
<div class="b" style="left:9px;top:558px;width:155px"></div><div class="m " style="left:13px;top:562px">Single Chunk Textured</div>
<div class="b" style="left:9px;top:581px;width:232px"></div><div class="m " style="left:13px;top:585px">Single Chunk Textured Fixed Step</div>
<div class="b" style="left:9px;top:604px;width:246px"></div><div class="m " style="left:13px;top:608px">Single Chunk Textured Brickmap Gpu</div>
<div class="b" style="left:9px;top:627px;width:232px;background:#7f7f80;border-radius:4px"></div><div class="m " style="left:13px;top:631px">Single Chunk Textured Octree Gpu</div>
<div class="b" style="left:9px;top:650px;width:148px"></div><div class="m " style="left:13px;top:654px">Multi Chunk Textured</div>
<div class="b" style="left:9px;top:673px;width:225px"></div><div class="m " style="left:13px;top:677px">Multi Chunk Textured Fixed Step</div>
<div class="b" style="left:9px;top:696px;width:239px"></div><div class="m " style="left:13px;top:700px">Multi Chunk Textured Brickmap Gpu</div>
<div class="b" style="left:9px;top:719px;width:225px"></div><div class="m " style="left:13px;top:723px">Multi Chunk Textured Octree Gpu</div>
<div class="p" style="left:1px;top:870px;width:1920px;height:248px"></div>
<div class="vb" style="left:1px;top:869px;width:1920px;height:2px;background:#37324c"></div>
<div class="t" style="left:1px;top:871px;width:1418px;height:19px"></div><svg width="1922" height="1119" style="pointer-events:none" viewBox="0 0 1922 1119"><rect x="9" y="876" width="8" height="2" fill="#f4f4f4"/><path d="M9 879.2h8l-4 6.3z" fill="#f4f4f4"/></svg><div class="m " style="left:27px;top:875px">Log Console</div>
<svg width="1922" height="1119" viewBox="0 0 1922 1119"><path d="M990 890H1020L1006 906z" fill="#1f2029"/></svg><div class="b" style="left:9px;top:898px;width:43px"></div><div class="m " style="left:13px;top:902px">Clear</div>
<div class="m g" style="left:9px;top:922px">[2024-09-20 01:07:56.481] [info] Game starts, the resolution is 1920x1080</div><div class="m g" style="left:9px;top:939px">[2024-09-20 01:07:56.531] [info] [StateStack] Pushing state: RaycastSingleChunkTexturedOctreeGpu</div><div class="m y" style="left:9px;top:956px">[2024-09-20 01:07:56.548] [warning] Can not open given shader file: resources/Shaders/Raycast/Debug/ChunkTexturedVoxelsOctreeGpu.gs of type GeometryShader. Ignoring it.</div><div class="m g" style="left:9px;top:973px">[2024-09-20 01:08:01.558] [info] Switch Depth is enabled</div><div class="m g" style="left:9px;top:990px">[2024-09-20 01:08:02.801] [info] Switch Depth is disabled</div><div class="m g" style="left:9px;top:1007px">[2024-09-20 01:08:03.945] [info] Switch Normals is enabled</div><div class="m g" style="left:9px;top:1024px">[2024-09-20 01:08:07.001] [info] Switch Normals is disabled</div>
<div class="vb" style="left:1419px;top:871px;width:2px;height:247px"></div><div class="vb" style="left:1671px;top:871px;width:2px;height:247px"></div>
<div class="t" style="left:1421px;top:871px;width:250px;height:19px"></div><div style="position:absolute;left:1443px;top:872px;width:44px;height:18px;background:#323745;border-radius:4px 4px 0 0"></div><div style="position:absolute;left:1421px;top:889px;width:250px;height:1px;background:#3a4058"></div><svg width="1922" height="1119" style="pointer-events:none" viewBox="0 0 1922 1119"><rect x="1429" y="876" width="8" height="2" fill="#f4f4f4"/><path d="M1429 879.2h8l-4 6.3z" fill="#f4f4f4"/></svg><div class="m " style="left:1447px;top:875px">Debug</div>
<div class="t" style="left:1673px;top:871px;width:248px;height:19px"></div><svg width="1922" height="1119" style="pointer-events:none" viewBox="0 0 1922 1119"><rect x="1681" y="876" width="8" height="2" fill="#f4f4f4"/><path d="M1681 879.2h8l-4 6.3z" fill="#f4f4f4"/></svg><div class="m " style="left:1699px;top:875px">Camera</div>
<div class="b" style="left:1429px;top:898px;width:106px"></div><div class="m " style="left:1433px;top:902px">Switch Normals</div>
<div class="b" style="left:1429px;top:921px;width:92px"></div><div class="m " style="left:1433px;top:925px">Switch Depth</div>
<div class="b" style="left:1429px;top:944px;width:176px"></div><div class="m " style="left:1433px;top:948px">Switch Ray Visualization</div>
<div class="b" style="left:1429px;top:967px;width:176px"></div><div class="m " style="left:1433px;top:971px">Switch Visibility Sphere</div>
<div class="b" style="left:1681px;top:898px;width:120px"></div><div class="m " style="left:1685px;top:902px">Switch to Manual</div>
<div class="b" style="left:1681px;top:921px;width:120px"></div><div class="m " style="left:1685px;top:925px">Switch to Static</div>
<div style="position:absolute;left:0;top:0;width:1920px;height:1117px;border:1px solid #444446;border-top-color:#2b2b2d;border-left-color:#3c3d40;border-radius:10px;pointer-events:none"></div>

</div></body></html>
